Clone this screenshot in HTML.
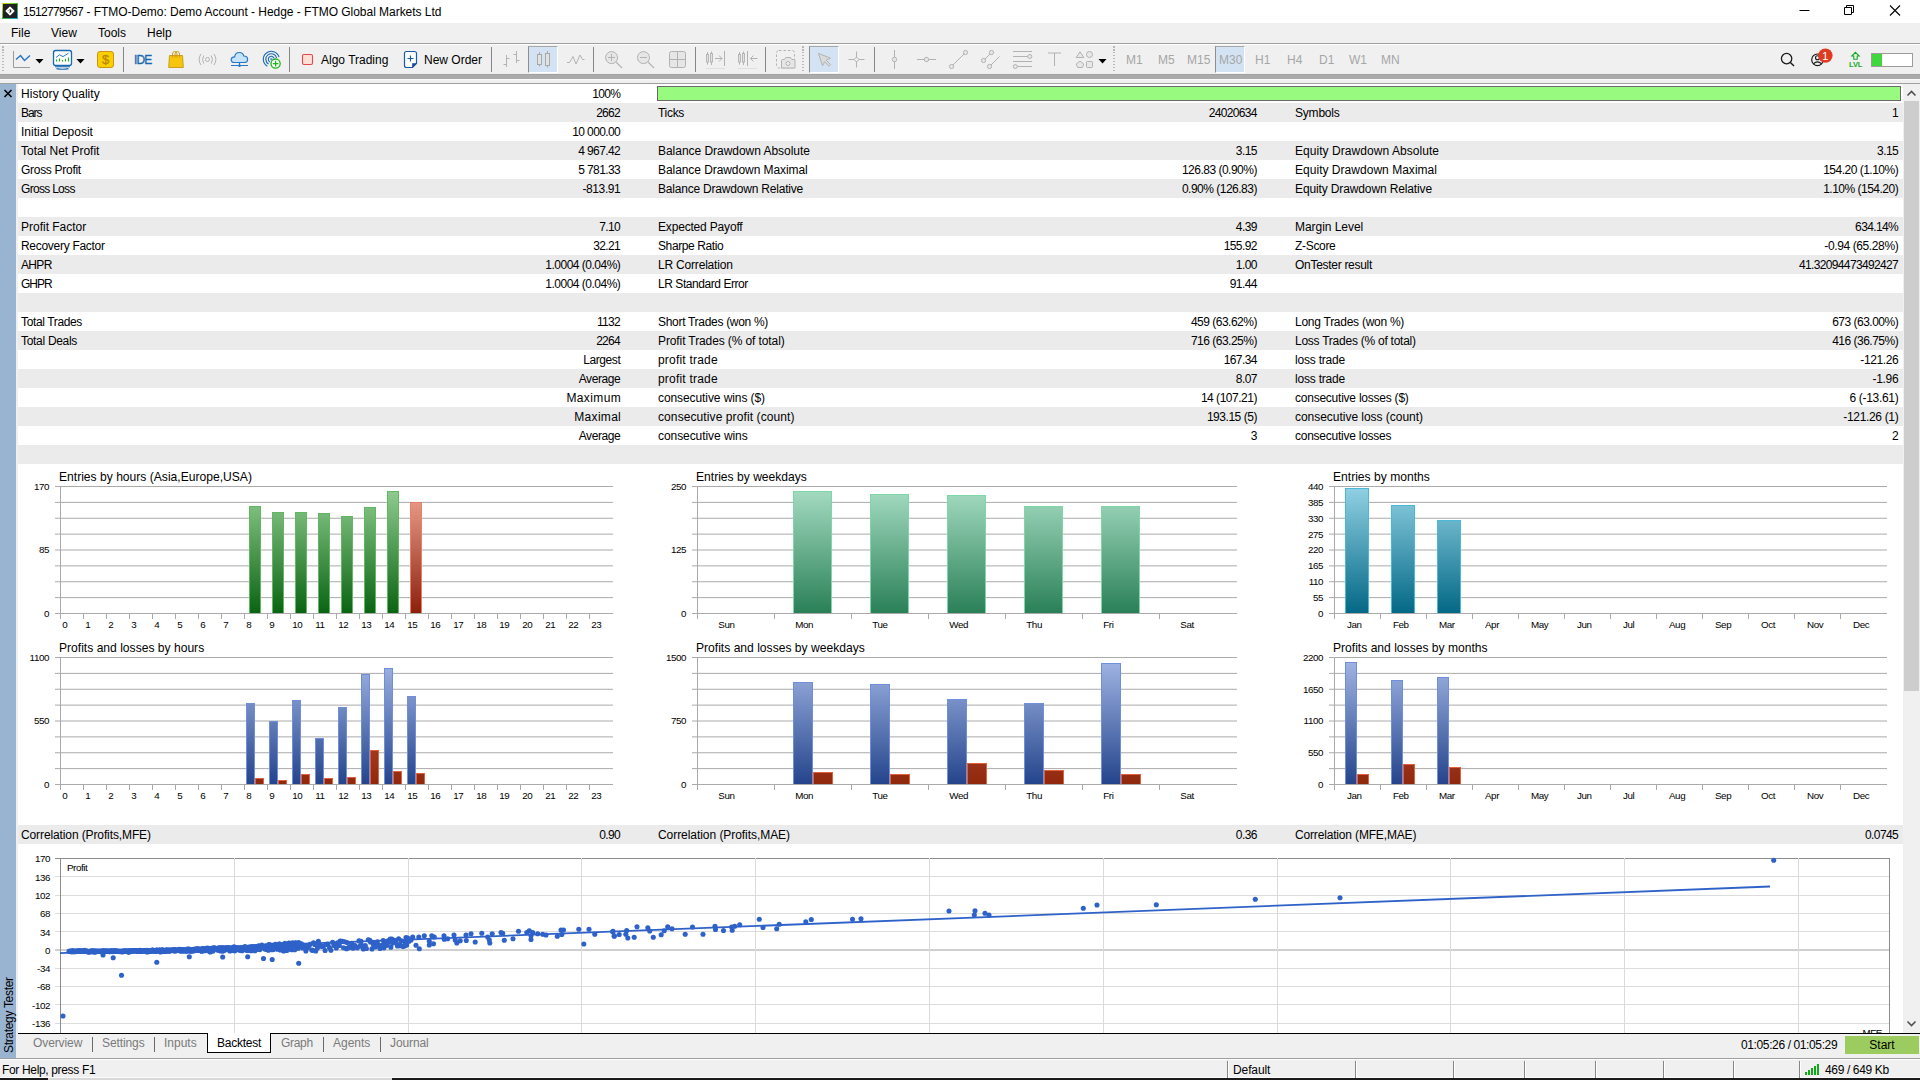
<!DOCTYPE html><html><head><meta charset="utf-8"><title>MT5</title><style>

*{box-sizing:border-box;margin:0;padding:0}
html,body{width:1920px;height:1080px;overflow:hidden;background:#f0f0f0;font-family:"Liberation Sans",sans-serif;font-size:12px;color:#000}
.abs{position:absolute}
.t{position:absolute;white-space:nowrap;line-height:19px;height:19px;font-size:12px;margin-top:1px}
.r{text-align:right}
.row{position:absolute;left:18px;width:1885px;height:19px}
.g{background:#ebebeb}
.wh{background:#fff}
svg{position:absolute;left:0;top:0}
.tab{position:absolute;top:1034px;height:19px;line-height:18px;color:#7a7a7a;font-size:12px;white-space:nowrap}
.tf{position:absolute;top:49px;height:20px;line-height:20px;font-size:12px;color:#9a9a9a;white-space:nowrap}

</style></head><body>
<div class="abs" style="left:0;top:0;width:1920px;height:23px;background:#fff"></div>
<div class="abs" style="left:2px;top:3px;width:16px;height:16px;background:linear-gradient(135deg,#ecd81c 0%,#3cc028 50%,#1c9cec 100%)"></div>
<div class="abs" style="left:3px;top:4px;width:14px;height:14px;background:#212123"></div>
<svg width="20" height="22" viewBox="0 0 20 22"><path d="M10 7.1 L13.9 11 L10 14.9 L6.1 11 Z" fill="#fff" stroke="#fff" stroke-width="1.2" stroke-linejoin="round"/><path d="M9.9 9.4 Q12.6 11 9.9 12.6 Q10.9 11 9.9 9.4 Z" fill="#111" stroke="#111" stroke-width="0.7"/><path d="M7.6 11.3 L9.2 9.7" stroke="#999" stroke-width="0.6"/></svg>
<div class="t" style="left:23px;top:2px;letter-spacing:-0.03px"><span style="letter-spacing:-0.66px">1512779567</span> - FTMO-Demo: Demo Account - Hedge - FTMO Global Markets Ltd</div>
<svg width="1920" height="23" viewBox="0 0 1920 23"><path d="M1799.5 10.5 H1809.5" stroke="#000" stroke-width="1"/><path d="M1844.5 7.5 H1851.5 V14.5 H1844.5 Z M1846.5 7.5 V5.5 H1853.5 V12.5 H1851.5" fill="none" stroke="#000" stroke-width="1"/><path d="M1890 5.5 L1900 15.5 M1900 5.5 L1890 15.5" stroke="#000" stroke-width="1.1"/></svg>
<div class="abs" style="left:0;top:23px;width:1920px;height:20px;background:#f0f0f0"></div>
<div class="t" style="left:11px;top:23px">File</div>
<div class="t" style="left:51px;top:23px">View</div>
<div class="t" style="left:98px;top:23px">Tools</div>
<div class="t" style="left:147px;top:23px">Help</div>
<div class="abs" style="left:0;top:43px;width:1920px;height:1px;background:#a0a0a0"></div>
<div class="abs" style="left:0;top:44px;width:1920px;height:1px;background:#fff"></div>
<div class="abs" style="left:0;top:74px;width:1920px;height:5px;background:#ababab;border-top:1px solid #a2a2a2"></div>
<div class="abs" style="left:0;top:79px;width:1920px;height:1px;background:#fafafa"></div>
<div class="abs" style="left:0;top:83px;width:1920px;height:1px;background:#a0a0a0"></div>
<div class="abs" style="left:528px;top:46px;width:30px;height:27px;background:#d4e3f4;border-left:1px solid #8e8e8e;border-top:1px solid #a8a8a8;border-right:1px solid #fff;border-bottom:1px solid #fff"></div>
<div class="abs" style="left:809px;top:46px;width:30px;height:27px;background:#d4e3f4;border-left:1px solid #8e8e8e;border-top:1px solid #a8a8a8;border-right:1px solid #fff;border-bottom:1px solid #fff"></div>
<div class="abs" style="left:1215px;top:46px;width:30px;height:27px;background:#d4e3f4;border-left:1px solid #8e8e8e;border-top:1px solid #a8a8a8;border-right:1px solid #fff;border-bottom:1px solid #fff"></div>
<div class="abs" style="left:123px;top:47px;width:1px;height:25px;background:#868686"></div>
<div class="abs" style="left:289px;top:47px;width:1px;height:25px;background:#868686"></div>
<div class="abs" style="left:491px;top:47px;width:1px;height:25px;background:#868686"></div>
<div class="abs" style="left:593px;top:47px;width:1px;height:25px;background:#868686"></div>
<div class="abs" style="left:695px;top:47px;width:1px;height:25px;background:#868686"></div>
<div class="abs" style="left:765px;top:47px;width:1px;height:25px;background:#868686"></div>
<div class="abs" style="left:874px;top:47px;width:1px;height:25px;background:#868686"></div>
<div class="abs" style="left:2px;top:46px;width:2px;height:27px;background:repeating-linear-gradient(180deg,#b8b8b8 0,#b8b8b8 1.5px,transparent 1.5px,transparent 3px)"></div>
<div class="abs" style="left:802px;top:46px;width:2px;height:27px;background:repeating-linear-gradient(180deg,#b8b8b8 0,#b8b8b8 1.5px,transparent 1.5px,transparent 3px)"></div>
<div class="abs" style="left:1113px;top:46px;width:2px;height:27px;background:repeating-linear-gradient(180deg,#b8b8b8 0,#b8b8b8 1.5px,transparent 1.5px,transparent 3px)"></div>
<div class="t" style="left:321px;top:50px">Algo Trading</div>
<div class="t" style="left:424px;top:50px">New Order</div>
<div class="t" style="left:1126px;top:50px;color:#a6a6a6">M1</div>
<div class="t" style="left:1158px;top:50px;color:#a6a6a6">M5</div>
<div class="t" style="left:1187px;top:50px;color:#a6a6a6">M15</div>
<div class="t" style="left:1219px;top:50px;color:#a6a6a6">M30</div>
<div class="t" style="left:1255px;top:50px;color:#a6a6a6">H1</div>
<div class="t" style="left:1287px;top:50px;color:#a6a6a6">H4</div>
<div class="t" style="left:1319px;top:50px;color:#a6a6a6">D1</div>
<div class="t" style="left:1349px;top:50px;color:#a6a6a6">W1</div>
<div class="t" style="left:1381px;top:50px;color:#a6a6a6">MN</div>
<div class="t" style="left:134px;top:49px;color:#1a68b0;font-size:13px;letter-spacing:-0.9px;-webkit-text-stroke:0.35px #1a68b0;transform-origin:0 50%;transform:scaleX(0.92)">IDE</div>
<svg width="1920" height="84" viewBox="0 0 1920 84" fill="none" stroke-linecap="butt">
<path d="M13.5 51 V67.5 H30" stroke="#9a9a9a" stroke-width="1"/>
<path d="M16 59.5 L20.5 55.5 L24.5 60.5 L30 55.5" stroke="#2a78c4" stroke-width="1.5"/>
<path d="M35.5 59 H43.5 L39.5 63.5 Z" fill="#000"/>
<rect x="53.5" y="50.5" width="18" height="15" rx="2.2" stroke="#1a68b0" stroke-width="1.3" fill="#fff"/>
<path d="M55 66.8 H70 M56.5 68.6 Q62.5 70 68.5 68.6" stroke="#1a68b0" stroke-width="1.1"/>
<path d="M56 57.5 L59.5 54.8 L63 56.6 L68.5 53.2" stroke="#2a78c4" stroke-width="1"/>
<path d="M56.5 61.5 V59.5 M59.5 61.5 V58.5 M62.5 61.5 V60 M65.5 61.5 V59 M68.5 61.5 V57.5" stroke="#22b022" stroke-width="1.2"/>
<path d="M76.5 59 H84.5 L80.5 63.5 Z" fill="#000"/>
<rect x="97.5" y="51.5" width="16" height="16" rx="2.5" fill="#fcd000" stroke="#c99512" stroke-width="1"/>
<text x="105.5" y="64.2" text-anchor="middle" font-size="13" fill="#b8860e" stroke="#b8860e" stroke-width="0.3" style="font-family:'Liberation Sans',sans-serif">$</text>
<path d="M169.5 55.5 H182.5 L183.3 67.5 H168.7 Z" fill="#f6c60c" stroke="#c99512" stroke-width="0.9"/>
<path d="M172.5 57.5 V54 Q172.5 51.5 174.7 51.5 Q177 51.5 177 54 V57.5 M175 57.5 V54 Q175 51.5 177.3 51.5 Q179.5 51.5 179.5 54 V57.5" stroke="#c99512" stroke-width="0.9"/>
<circle cx="207.5" cy="59.5" r="2" stroke="#b2b2b2" stroke-width="1"/>
<path d="M203.8 55.5 Q201.2 59.5 203.8 63.5 M211.2 55.5 Q213.8 59.5 211.2 63.5 M201 54 Q197.2 59.5 201 65 M214 54 Q217.8 59.5 214 65" stroke="#b2b2b2" stroke-width="1"/>
<path d="M234.5 62.5 Q231 62.5 231.2 59.5 Q231.5 56.8 234.6 56.8 Q235.2 52.5 239.3 52.5 Q243 52.5 243.8 56 Q247.6 56.2 247.6 59.4 Q247.6 62.5 244 62.5 Z" fill="#c6e4ff" stroke="#2a78c4" stroke-width="1.2"/>
<path d="M239.5 62.5 V65.5 M231 65.5 H248" stroke="#2a78c4" stroke-width="1.2"/><circle cx="239.5" cy="65.7" r="1.3" fill="#2a78c4"/>
<path d="M267.30 66.23 A8 8 0 1 1 279.03 57.23" stroke="#1a68b0" stroke-width="1.1"/>
<path d="M268.55 64.06 A5.5 5.5 0 1 1 276.61 57.88" stroke="#1a68b0" stroke-width="1.1"/>
<path d="M269.80 61.90 A3 3 0 1 1 274.20 58.52" stroke="#1a68b0" stroke-width="1.1"/>
<circle cx="271.3" cy="59.3" r="1.2" fill="#5a9ad8"/>
<circle cx="275.6" cy="63.6" r="4.6" fill="#fff" stroke="#1eb41e" stroke-width="1.3"/>
<path d="M272.8 63.6 H278.4 M275.6 60.8 V66.4" stroke="#1eb41e" stroke-width="1.3"/>
<rect x="302.5" y="54.5" width="10" height="10" rx="1.5" fill="#ffe0d8" stroke="#e2484a" stroke-width="1.1"/>
<path d="M406.5 51.5 H414.5 Q416.5 51.5 416.5 53.5 V63.5 L412.5 67.5 H406.5 Q404.5 67.5 404.5 65.5 V53.5 Q404.5 51.5 406.5 51.5 Z" fill="#fff" stroke="#1a5ca4" stroke-width="1.2"/>
<path d="M416.5 63.5 L412.5 67.5 V63.5 Z" fill="#1a4c94" stroke="#1a4c94" stroke-width="0.6"/>
<path d="M407.5 58.5 H413.5 M410.5 55.5 V61.5" stroke="#1a5ca4" stroke-width="1.2"/>
<path d="M506.5 55 V67 M503.5 64.5 H506.5 M506.5 58.5 H509.5 M516.5 51 V63 M513.5 54.5 H516.5 M516.5 60.5 H519.5" stroke="#b2b2b2" stroke-width="1"/>
<path d="M539.5 52 V66.5 M547.5 51 V67.5" stroke="#a8a8a8" stroke-width="1"/>
<rect x="537.5" y="54.5" width="4" height="10" fill="#e2e2e2" stroke="#a8a8a8" stroke-width="1"/><rect x="545.5" y="53.5" width="4" height="12" fill="#e2e2e2" stroke="#a8a8a8" stroke-width="1"/>
<path d="M567 62.5 H569.5 L573 56.5 L576 64 L580 55 L582.5 59.5 H584.5" stroke="#b2b2b2" stroke-width="1"/>
<circle cx="611.6" cy="57.6" r="6" fill="#e6e6e6" stroke="#b2b2b2" stroke-width="1"/><path d="M616 62 L622 68" stroke="#b2b2b2" stroke-width="1.1"/><path d="M608 57.5 H615 M611.5 54 V61" stroke="#b2b2b2" stroke-width="1"/>
<circle cx="643.5" cy="57.6" r="6" fill="#e6e6e6" stroke="#b2b2b2" stroke-width="1"/><path d="M648 62 L654 68" stroke="#b2b2b2" stroke-width="1.1"/><path d="M640 57.5 H647" stroke="#b2b2b2" stroke-width="1"/>
<rect x="669.5" y="51.5" width="16" height="16" rx="2" fill="#e6e6e6" stroke="#b2b2b2" stroke-width="1"/><path d="M677.5 51.5 V67.5 M669.5 59.5 H685.5" stroke="#b2b2b2" stroke-width="1"/>
<path d="M707.5 52 V64.5 M711.5 51.5 V65" stroke="#b2b2b2" stroke-width="1"/>
<rect x="706.5" y="54.5" width="2" height="7.5" fill="#e2e2e2" stroke="#b2b2b2" stroke-width="0.9"/><rect x="710.5" y="53.5" width="2" height="8.5" fill="#e2e2e2" stroke="#b2b2b2" stroke-width="0.9"/>
<path d="M706 68.5 H725" stroke="#e0e0e0" stroke-width="1"/>
<path d="M739.5 52 V64.5 M743.5 51.5 V65" stroke="#b2b2b2" stroke-width="1"/>
<rect x="738.5" y="54.5" width="2" height="7.5" fill="#e2e2e2" stroke="#b2b2b2" stroke-width="0.9"/><rect x="742.5" y="53.5" width="2" height="8.5" fill="#e2e2e2" stroke="#b2b2b2" stroke-width="0.9"/>
<path d="M738 68.5 H757" stroke="#e0e0e0" stroke-width="1"/>
<path d="M715 58.5 H722 M719 55.5 L722 58.5 L719 61.5 M724.5 51 V66" stroke="#b2b2b2" stroke-width="1"/>
<path d="M747.5 51 V66 M750.5 58.5 H757.5 M753.5 55.5 L750.5 58.5 L753.5 61.5" stroke="#b2b2b2" stroke-width="1"/>
<rect x="776.5" y="50.5" width="18" height="17.5" rx="2.5" stroke="#b2b2b2" stroke-width="1" stroke-dasharray="2.5 2"/>
<path d="M781.5 68 V60.5 Q781.5 59.5 782.5 59.5 H784.5 L785.8 57.5 H790.5 L791.8 59.5 H794 Q795 59.5 795 60.5 V68 Z" fill="#e6e6e6" stroke="#b2b2b2" stroke-width="1"/><circle cx="788" cy="63.5" r="2" fill="#f0f0f0" stroke="#b2b2b2" stroke-width="1"/>
<path d="M818.4 53.4 L830.5 58.2 L826.2 60.2 L830.6 64.6 L829 66.2 L824.6 61.8 L822.6 65.8 Z" fill="#dadada" stroke="#b2b2b2" stroke-width="1" stroke-linejoin="round"/>
<path d="M848.5 59.5 H864.5 M856.5 51.5 V67.5" stroke="#b2b2b2" stroke-width="1"/><path d="M856.5 57 L859 59.5 L856.5 62 L854 59.5 Z" fill="#f0f0f0" stroke="#b2b2b2" stroke-width="1"/>
<path d="M894.5 50 V69" stroke="#b2b2b2" stroke-width="1"/><circle cx="894.5" cy="59.5" r="2.2" fill="#e8e8e8" stroke="#b2b2b2" stroke-width="1"/>
<path d="M917 59.5 H936" stroke="#b2b2b2" stroke-width="1"/><circle cx="926.5" cy="59.5" r="2.2" fill="#e8e8e8" stroke="#b2b2b2" stroke-width="1"/>
<path d="M951.5 66.5 L965.5 52.5" stroke="#b2b2b2" stroke-width="1"/><circle cx="951.5" cy="66.5" r="2.1" fill="#e8e8e8" stroke="#b2b2b2" stroke-width="1"/><circle cx="965.5" cy="52.5" r="2.1" fill="#e8e8e8" stroke="#b2b2b2" stroke-width="1"/>
<path d="M983.5 60.5 L991.5 52.5 M989.5 66.5 L999.5 56.5" stroke="#b2b2b2" stroke-width="1"/><circle cx="983.5" cy="60.5" r="2.1" fill="#e8e8e8" stroke="#b2b2b2" stroke-width="1"/><circle cx="991.5" cy="52.5" r="2.1" fill="#e8e8e8" stroke="#b2b2b2" stroke-width="1"/><circle cx="989.5" cy="66.5" r="2.1" fill="#e8e8e8" stroke="#b2b2b2" stroke-width="1"/>
<path d="M1013 51.5 H1032 M1013 56.5 H1028 M1013 61.5 H1032 M1017 66.5 H1032" stroke="#b2b2b2" stroke-width="1"/><circle cx="1029.8" cy="56.5" r="2" fill="#e8e8e8" stroke="#b2b2b2" stroke-width="1"/><circle cx="1015.3" cy="66.5" r="2" fill="#e8e8e8" stroke="#b2b2b2" stroke-width="1"/>
<path d="M1048 53 H1061 M1054.5 53 V66" stroke="#b2b2b2" stroke-width="1"/>
<path d="M1080 51.8 L1083.8 57.5 H1076.2 Z" fill="#e8e8e8" stroke="#b2b2b2" stroke-width="1"/><circle cx="1089.5" cy="54.5" r="3" fill="#e8e8e8" stroke="#b2b2b2" stroke-width="1"/><path d="M1080 61.2 L1083.8 64 L1082.4 67.5 H1077.6 L1076.2 64 Z" fill="#e8e8e8" stroke="#b2b2b2" stroke-width="1"/><rect x="1086.5" y="61.5" width="6" height="6" rx="0.8" fill="#e8e8e8" stroke="#b2b2b2" stroke-width="1"/>
<path d="M1098.5 59 H1106.5 L1102.5 63.5 Z" fill="#000"/>
<circle cx="1786.6" cy="58.6" r="5.2" stroke="#1a1a1a" stroke-width="1.3"/><path d="M1790.4 62.4 L1794 66" stroke="#1a1a1a" stroke-width="1.4"/>
<circle cx="1817.5" cy="59.8" r="5.8" stroke="#1a1a1a" stroke-width="1.2"/><circle cx="1817.5" cy="57.8" r="2" stroke="#1a1a1a" stroke-width="1.1"/><path d="M1813.4 63.8 Q1817.5 59.8 1821.6 63.8" stroke="#1a1a1a" stroke-width="1.1"/>
<circle cx="1825.4" cy="55.6" r="7.2" fill="#e03a20"/>
<text x="1825.3" y="60" text-anchor="middle" font-size="11.5" fill="#fff" stroke="none" style="font-family:'Liberation Sans',sans-serif">1</text>
<path d="M1855.5 52.3 L1859.2 56 H1857.2 V59.3 H1853.8 V56 H1851.8 Z" stroke="#18a828" stroke-width="1.1" fill="#eaffea"/>
<text x="1855.7" y="66.8" text-anchor="middle" font-size="7.6" font-weight="bold" fill="#18a828" stroke="none" letter-spacing="-0.2" style="font-family:'Liberation Sans',sans-serif">LVL</text>
<rect x="1871.5" y="53.5" width="41" height="13" fill="#fff" stroke="#9c9c9c" stroke-width="1"/><rect x="1872" y="54" width="10" height="12" fill="#3ed83e"/>
</svg>
<div class="abs" style="left:0;top:84px;width:16px;height:974px;background:#99b4d1"></div>
<svg width="16" height="110" style="top:84px" viewBox="0 0 16 110"><path d="M4.5 6 L11.5 13 M11.5 6 L4.5 13" stroke="#000" stroke-width="1.6"/></svg>
<div class="abs" style="left:1px;top:1053px;width:80px;height:16px;line-height:16px;font-size:12px;letter-spacing:-0.32px;transform-origin:0 0;transform:rotate(-90deg);white-space:nowrap">Strategy Tester</div>
<div class="abs" style="left:18px;top:84px;width:1885px;height:949px;background:#fff"></div>
<div class="t" style="left:21px;top:84px;letter-spacing:0.050px">History Quality</div>
<div class="t r" style="left:320.13px;width:300px;top:84px;letter-spacing:-0.673px">100%</div>
<div class="row g" style="top:103px"></div>
<div class="t" style="left:21px;top:103px;letter-spacing:-1.033px">Bars</div>
<div class="t r" style="left:320.13px;width:300px;top:103px;letter-spacing:-0.674px">2662</div>
<div class="t" style="left:658px;top:103px;letter-spacing:-0.300px">Ticks</div>
<div class="t r" style="left:956.73px;width:300px;top:103px;letter-spacing:-0.674px">24020634</div>
<div class="t" style="left:1295px;top:103px;letter-spacing:-0.200px">Symbols</div>
<div class="t r" style="left:1598.03px;width:300px;top:103px;letter-spacing:-0.674px">1</div>
<div class="t" style="left:21px;top:122px;letter-spacing:-0.007px">Initial Deposit</div>
<div class="t r" style="left:320.20px;width:300px;top:122px;letter-spacing:-0.598px">10 000.00</div>
<div class="row g" style="top:141px"></div>
<div class="t" style="left:21px;top:141px;letter-spacing:-0.020px">Total Net Profit</div>
<div class="t r" style="left:320.21px;width:300px;top:141px;letter-spacing:-0.589px">4 967.42</div>
<div class="t" style="left:658px;top:141px;letter-spacing:-0.033px">Balance Drawdown Absolute</div>
<div class="t r" style="left:956.81px;width:300px;top:141px;letter-spacing:-0.589px">3.15</div>
<div class="t" style="left:1295px;top:141px;letter-spacing:0.052px">Equity Drawdown Absolute</div>
<div class="t r" style="left:1598.11px;width:300px;top:141px;letter-spacing:-0.589px">3.15</div>
<div class="t" style="left:21px;top:160px;letter-spacing:-0.291px">Gross Profit</div>
<div class="t r" style="left:320.21px;width:300px;top:160px;letter-spacing:-0.589px">5 781.33</div>
<div class="t" style="left:658px;top:160px;letter-spacing:-0.070px">Balance Drawdown Maximal</div>
<div class="t r" style="left:956.90px;width:300px;top:160px;letter-spacing:-0.504px">126.83 (0.90%)</div>
<div class="t" style="left:1295px;top:160px;letter-spacing:0.027px">Equity Drawdown Maximal</div>
<div class="t r" style="left:1598.20px;width:300px;top:160px;letter-spacing:-0.504px">154.20 (1.10%)</div>
<div class="row g" style="top:179px"></div>
<div class="t" style="left:21px;top:179px;letter-spacing:-0.700px">Gross Loss</div>
<div class="t r" style="left:320.41px;width:300px;top:179px;letter-spacing:-0.386px">-813.91</div>
<div class="t" style="left:658px;top:179px;letter-spacing:-0.200px">Balance Drawdown Relative</div>
<div class="t r" style="left:956.90px;width:300px;top:179px;letter-spacing:-0.504px">0.90% (126.83)</div>
<div class="t" style="left:1295px;top:179px;letter-spacing:-0.126px">Equity Drawdown Relative</div>
<div class="t r" style="left:1598.20px;width:300px;top:179px;letter-spacing:-0.504px">1.10% (154.20)</div>
<div class="row g" style="top:217px"></div>
<div class="t" style="left:21px;top:217px;letter-spacing:-0.008px">Profit Factor</div>
<div class="t r" style="left:320.21px;width:300px;top:217px;letter-spacing:-0.589px">7.10</div>
<div class="t" style="left:658px;top:217px;letter-spacing:-0.179px">Expected Payoff</div>
<div class="t r" style="left:956.81px;width:300px;top:217px;letter-spacing:-0.589px">4.39</div>
<div class="t" style="left:1295px;top:217px;letter-spacing:-0.045px">Margin Level</div>
<div class="t r" style="left:1598.08px;width:300px;top:217px;letter-spacing:-0.625px">634.14%</div>
<div class="t" style="left:21px;top:236px;letter-spacing:-0.293px">Recovery Factor</div>
<div class="t r" style="left:320.19px;width:300px;top:236px;letter-spacing:-0.606px">32.21</div>
<div class="t" style="left:658px;top:236px;letter-spacing:-0.400px">Sharpe Ratio</div>
<div class="t r" style="left:956.78px;width:300px;top:236px;letter-spacing:-0.617px">155.92</div>
<div class="t" style="left:1295px;top:236px;letter-spacing:-0.317px">Z-Score</div>
<div class="t r" style="left:1598.32px;width:300px;top:236px;letter-spacing:-0.384px">-0.94 (65.28%)</div>
<div class="row g" style="top:255px"></div>
<div class="t" style="left:21px;top:255px;letter-spacing:-0.667px">AHPR</div>
<div class="t r" style="left:320.30px;width:300px;top:255px;letter-spacing:-0.504px">1.0004 (0.04%)</div>
<div class="t" style="left:658px;top:255px;letter-spacing:-0.192px">LR Correlation</div>
<div class="t r" style="left:956.81px;width:300px;top:255px;letter-spacing:-0.589px">1.00</div>
<div class="t" style="left:1295px;top:255px;letter-spacing:-0.293px">OnTester result</div>
<div class="t r" style="left:1598.05px;width:300px;top:255px;letter-spacing:-0.654px">41.32094473492427</div>
<div class="t" style="left:21px;top:274px;letter-spacing:-1.000px">GHPR</div>
<div class="t r" style="left:320.30px;width:300px;top:274px;letter-spacing:-0.504px">1.0004 (0.04%)</div>
<div class="t" style="left:658px;top:274px;letter-spacing:-0.444px">LR Standard Error</div>
<div class="t r" style="left:956.79px;width:300px;top:274px;letter-spacing:-0.606px">91.44</div>
<div class="row g" style="top:293px"></div>
<div class="t" style="left:21px;top:312px;letter-spacing:-0.364px">Total Trades</div>
<div class="t r" style="left:320.13px;width:300px;top:312px;letter-spacing:-0.674px">1132</div>
<div class="t" style="left:658px;top:312px;letter-spacing:-0.300px">Short Trades (won %)</div>
<div class="t r" style="left:956.90px;width:300px;top:312px;letter-spacing:-0.504px">459 (63.62%)</div>
<div class="t" style="left:1295px;top:312px;letter-spacing:-0.261px">Long Trades (won %)</div>
<div class="t r" style="left:1598.20px;width:300px;top:312px;letter-spacing:-0.504px">673 (63.00%)</div>
<div class="row g" style="top:331px"></div>
<div class="t" style="left:21px;top:331px;letter-spacing:-0.300px">Total Deals</div>
<div class="t r" style="left:320.13px;width:300px;top:331px;letter-spacing:-0.674px">2264</div>
<div class="t" style="left:658px;top:331px;letter-spacing:-0.108px">Profit Trades (% of total)</div>
<div class="t r" style="left:956.90px;width:300px;top:331px;letter-spacing:-0.504px">716 (63.25%)</div>
<div class="t" style="left:1295px;top:331px;letter-spacing:-0.248px">Loss Trades (% of total)</div>
<div class="t r" style="left:1598.20px;width:300px;top:331px;letter-spacing:-0.504px">416 (36.75%)</div>
<div class="t r" style="left:320.40px;width:300px;top:350px;letter-spacing:-0.400px">Largest</div>
<div class="t" style="left:658px;top:350px;letter-spacing:0.200px">profit trade</div>
<div class="t r" style="left:956.78px;width:300px;top:350px;letter-spacing:-0.617px">167.34</div>
<div class="t" style="left:1295px;top:350px;letter-spacing:-0.200px">loss trade</div>
<div class="t r" style="left:1598.31px;width:300px;top:350px;letter-spacing:-0.386px">-121.26</div>
<div class="row g" style="top:369px"></div>
<div class="t r" style="left:320.40px;width:300px;top:369px;letter-spacing:-0.400px">Average</div>
<div class="t" style="left:658px;top:369px;letter-spacing:0.200px">profit trade</div>
<div class="t r" style="left:956.81px;width:300px;top:369px;letter-spacing:-0.589px">8.07</div>
<div class="t" style="left:1295px;top:369px;letter-spacing:-0.200px">loss trade</div>
<div class="t r" style="left:1598.43px;width:300px;top:369px;letter-spacing:-0.270px">-1.96</div>
<div class="t r" style="left:321.20px;width:300px;top:388px;letter-spacing:0.400px">Maximum</div>
<div class="t" style="left:658px;top:388px;letter-spacing:-0.084px">consecutive wins ($)</div>
<div class="t r" style="left:956.91px;width:300px;top:388px;letter-spacing:-0.489px">14 (107.21)</div>
<div class="t" style="left:1295px;top:388px;letter-spacing:-0.233px">consecutive losses ($)</div>
<div class="t r" style="left:1598.40px;width:300px;top:388px;letter-spacing:-0.303px">6 (-13.61)</div>
<div class="row g" style="top:407px"></div>
<div class="t r" style="left:321.10px;width:300px;top:407px;letter-spacing:0.300px">Maximal</div>
<div class="t" style="left:658px;top:407px;letter-spacing:0.096px">consecutive profit (count)</div>
<div class="t r" style="left:956.93px;width:300px;top:407px;letter-spacing:-0.470px">193.15 (5)</div>
<div class="t" style="left:1295px;top:407px;letter-spacing:-0.030px">consecutive loss (count)</div>
<div class="t r" style="left:1598.36px;width:300px;top:407px;letter-spacing:-0.336px">-121.26 (1)</div>
<div class="t r" style="left:320.40px;width:300px;top:426px;letter-spacing:-0.400px">Average</div>
<div class="t" style="left:658px;top:426px;letter-spacing:-0.067px">consecutive wins</div>
<div class="t r" style="left:956.73px;width:300px;top:426px;letter-spacing:-0.674px">3</div>
<div class="t" style="left:1295px;top:426px;letter-spacing:-0.247px">consecutive losses</div>
<div class="t r" style="left:1598.03px;width:300px;top:426px;letter-spacing:-0.674px">2</div>
<div class="row g" style="top:445px"></div>
<div class="row g" style="top:825px"></div>
<div class="t" style="left:21px;top:825px;letter-spacing:-0.113px">Correlation (Profits,MFE)</div>
<div class="t r" style="left:320.21px;width:300px;top:825px;letter-spacing:-0.589px">0.90</div>
<div class="t" style="left:658px;top:825px;letter-spacing:-0.054px">Correlation (Profits,MAE)</div>
<div class="t r" style="left:956.81px;width:300px;top:825px;letter-spacing:-0.589px">0.36</div>
<div class="t" style="left:1295px;top:825px;letter-spacing:-0.165px">Correlation (MFE,MAE)</div>
<div class="t r" style="left:1598.08px;width:300px;top:825px;letter-spacing:-0.617px">0.0745</div>
<div class="abs" style="left:657px;top:86px;width:1244px;height:15px;background:#98fb80;border:1px solid #6a6a6a"></div>
<div class="abs" style="left:1904px;top:84px;width:16px;height:949px;background:#f0f0f0"></div>
<div class="abs" style="left:1904px;top:101px;width:15px;height:590px;background:#cdcdcd"></div>
<svg width="1920" height="1080" viewBox="0 0 1920 1080" style="pointer-events:none"><path d="M1907.5 95.5 L1911.5 91.5 L1915.5 95.5" fill="none" stroke="#505050" stroke-width="1.6"/><path d="M1907.5 1021.5 L1911.5 1025.5 L1915.5 1021.5" fill="none" stroke="#505050" stroke-width="1.6"/></svg>
<svg width="1920" height="1080" viewBox="0 0 1920 1080" shape-rendering="crispEdges" style="font-family:'Liberation Sans',sans-serif">
<style>.ct{font-size:9.8px;fill:#000;letter-spacing:-0.42px}.ctt{font-size:12.1px;fill:#000}</style>
<defs>
<linearGradient id="gG" gradientUnits="userSpaceOnUse" x1="0" y1="486" x2="0" y2="613"><stop offset="0" stop-color="#93cf93"/><stop offset="1" stop-color="#0a6412"/></linearGradient>
<linearGradient id="gR" gradientUnits="userSpaceOnUse" x1="0" y1="486" x2="0" y2="613"><stop offset="0" stop-color="#f2a894"/><stop offset="1" stop-color="#8c200c"/></linearGradient>
<linearGradient id="gT" gradientUnits="userSpaceOnUse" x1="0" y1="486" x2="0" y2="613"><stop offset="0" stop-color="#a8dec4"/><stop offset="1" stop-color="#2a8058"/></linearGradient>
<linearGradient id="gC" gradientUnits="userSpaceOnUse" x1="0" y1="486" x2="0" y2="613"><stop offset="0" stop-color="#92d2e4"/><stop offset="1" stop-color="#036886"/></linearGradient>
<linearGradient id="gB" gradientUnits="userSpaceOnUse" x1="0" y1="657" x2="0" y2="784"><stop offset="0" stop-color="#a4b8e6"/><stop offset="1" stop-color="#24448c"/></linearGradient>
<linearGradient id="gO" gradientUnits="userSpaceOnUse" x1="0" y1="657" x2="0" y2="784"><stop offset="0" stop-color="#c86848"/><stop offset="1" stop-color="#90280e"/></linearGradient>
</defs>
<line x1="55" y1="486.5" x2="613" y2="486.5" stroke="#aaaaaa" stroke-width="1" shape-rendering="geometricPrecision"/>
<line x1="55" y1="502.38" x2="613" y2="502.38" stroke="#aaaaaa" stroke-width="1" shape-rendering="geometricPrecision"/>
<line x1="55" y1="518.25" x2="613" y2="518.25" stroke="#aaaaaa" stroke-width="1" shape-rendering="geometricPrecision"/>
<line x1="55" y1="534.12" x2="613" y2="534.12" stroke="#aaaaaa" stroke-width="1" shape-rendering="geometricPrecision"/>
<line x1="55" y1="550" x2="613" y2="550" stroke="#aaaaaa" stroke-width="1" shape-rendering="geometricPrecision"/>
<line x1="55" y1="565.88" x2="613" y2="565.88" stroke="#aaaaaa" stroke-width="1" shape-rendering="geometricPrecision"/>
<line x1="55" y1="581.75" x2="613" y2="581.75" stroke="#aaaaaa" stroke-width="1" shape-rendering="geometricPrecision"/>
<line x1="55" y1="597.62" x2="613" y2="597.62" stroke="#aaaaaa" stroke-width="1" shape-rendering="geometricPrecision"/>
<line x1="55" y1="613.5" x2="613" y2="613.5" stroke="#aaaaaa" stroke-width="1" shape-rendering="geometricPrecision"/>
<rect x="60" y="486" width="1" height="128" fill="#aaaaaa"/>
<rect x="249.5" y="506.5" width="11" height="106.5" fill="url(#gG)" stroke="#62b862" stroke-width="1"/>
<rect x="272.5" y="512.5" width="11" height="100.5" fill="url(#gG)" stroke="#62b862" stroke-width="1"/>
<rect x="295.5" y="512" width="11" height="101" fill="url(#gG)" stroke="#62b862" stroke-width="1"/>
<rect x="318.5" y="513.5" width="11" height="99.5" fill="url(#gG)" stroke="#62b862" stroke-width="1"/>
<rect x="341.5" y="516.5" width="11" height="96.5" fill="url(#gG)" stroke="#62b862" stroke-width="1"/>
<rect x="364.5" y="507.5" width="11" height="105.5" fill="url(#gG)" stroke="#62b862" stroke-width="1"/>
<rect x="387.5" y="491.5" width="11" height="121.5" fill="url(#gG)" stroke="#62b862" stroke-width="1"/>
<rect x="410.5" y="502.5" width="11" height="110.5" fill="url(#gR)" stroke="#e8806a" stroke-width="1"/>
<rect x="55" y="613" width="558" height="1" fill="#aaaaaa"/>
<rect x="60" y="613" width="1" height="6" fill="#aaaaaa"/>
<rect x="83" y="613" width="1" height="6" fill="#aaaaaa"/>
<rect x="106" y="613" width="1" height="6" fill="#aaaaaa"/>
<rect x="129" y="613" width="1" height="6" fill="#aaaaaa"/>
<rect x="152" y="613" width="1" height="6" fill="#aaaaaa"/>
<rect x="175" y="613" width="1" height="6" fill="#aaaaaa"/>
<rect x="198" y="613" width="1" height="6" fill="#aaaaaa"/>
<rect x="221" y="613" width="1" height="6" fill="#aaaaaa"/>
<rect x="244" y="613" width="1" height="6" fill="#aaaaaa"/>
<rect x="267" y="613" width="1" height="6" fill="#aaaaaa"/>
<rect x="290" y="613" width="1" height="6" fill="#aaaaaa"/>
<rect x="313" y="613" width="1" height="6" fill="#aaaaaa"/>
<rect x="336" y="613" width="1" height="6" fill="#aaaaaa"/>
<rect x="359" y="613" width="1" height="6" fill="#aaaaaa"/>
<rect x="382" y="613" width="1" height="6" fill="#aaaaaa"/>
<rect x="405" y="613" width="1" height="6" fill="#aaaaaa"/>
<rect x="428" y="613" width="1" height="6" fill="#aaaaaa"/>
<rect x="451" y="613" width="1" height="6" fill="#aaaaaa"/>
<rect x="474" y="613" width="1" height="6" fill="#aaaaaa"/>
<rect x="497" y="613" width="1" height="6" fill="#aaaaaa"/>
<rect x="520" y="613" width="1" height="6" fill="#aaaaaa"/>
<rect x="543" y="613" width="1" height="6" fill="#aaaaaa"/>
<rect x="566" y="613" width="1" height="6" fill="#aaaaaa"/>
<rect x="589" y="613" width="1" height="6" fill="#aaaaaa"/>
<text x="49" y="489.9" text-anchor="end" class="ct">170</text>
<text x="49" y="553.4" text-anchor="end" class="ct">85</text>
<text x="49" y="616.9" text-anchor="end" class="ct">0</text>
<text x="62.3" y="628" class="ct">0</text>
<text x="85.3" y="628" class="ct">1</text>
<text x="108.3" y="628" class="ct">2</text>
<text x="131.3" y="628" class="ct">3</text>
<text x="154.3" y="628" class="ct">4</text>
<text x="177.3" y="628" class="ct">5</text>
<text x="200.3" y="628" class="ct">6</text>
<text x="223.3" y="628" class="ct">7</text>
<text x="246.3" y="628" class="ct">8</text>
<text x="269.3" y="628" class="ct">9</text>
<text x="292.3" y="628" class="ct">10</text>
<text x="315.3" y="628" class="ct">11</text>
<text x="338.3" y="628" class="ct">12</text>
<text x="361.3" y="628" class="ct">13</text>
<text x="384.3" y="628" class="ct">14</text>
<text x="407.3" y="628" class="ct">15</text>
<text x="430.3" y="628" class="ct">16</text>
<text x="453.3" y="628" class="ct">17</text>
<text x="476.3" y="628" class="ct">18</text>
<text x="499.3" y="628" class="ct">19</text>
<text x="522.3" y="628" class="ct">20</text>
<text x="545.3" y="628" class="ct">21</text>
<text x="568.3" y="628" class="ct">22</text>
<text x="591.3" y="628" class="ct">23</text>
<text x="59" y="481" class="ctt">Entries by hours (Asia,Europe,USA)</text>
<line x1="692" y1="486.5" x2="1237" y2="486.5" stroke="#aaaaaa" stroke-width="1" shape-rendering="geometricPrecision"/>
<line x1="692" y1="502.38" x2="1237" y2="502.38" stroke="#aaaaaa" stroke-width="1" shape-rendering="geometricPrecision"/>
<line x1="692" y1="518.25" x2="1237" y2="518.25" stroke="#aaaaaa" stroke-width="1" shape-rendering="geometricPrecision"/>
<line x1="692" y1="534.12" x2="1237" y2="534.12" stroke="#aaaaaa" stroke-width="1" shape-rendering="geometricPrecision"/>
<line x1="692" y1="550" x2="1237" y2="550" stroke="#aaaaaa" stroke-width="1" shape-rendering="geometricPrecision"/>
<line x1="692" y1="565.88" x2="1237" y2="565.88" stroke="#aaaaaa" stroke-width="1" shape-rendering="geometricPrecision"/>
<line x1="692" y1="581.75" x2="1237" y2="581.75" stroke="#aaaaaa" stroke-width="1" shape-rendering="geometricPrecision"/>
<line x1="692" y1="597.62" x2="1237" y2="597.62" stroke="#aaaaaa" stroke-width="1" shape-rendering="geometricPrecision"/>
<line x1="692" y1="613.5" x2="1237" y2="613.5" stroke="#aaaaaa" stroke-width="1" shape-rendering="geometricPrecision"/>
<rect x="697" y="486" width="1" height="128" fill="#aaaaaa"/>
<rect x="793.5" y="491.5" width="38" height="121.5" fill="url(#gT)" stroke="#7fd6a6" stroke-width="1"/>
<rect x="870.5" y="494.5" width="38" height="118.5" fill="url(#gT)" stroke="#7fd6a6" stroke-width="1"/>
<rect x="947.5" y="495.5" width="38" height="117.5" fill="url(#gT)" stroke="#7fd6a6" stroke-width="1"/>
<rect x="1024.5" y="506" width="38" height="107" fill="url(#gT)" stroke="#7fd6a6" stroke-width="1"/>
<rect x="1101.5" y="506.5" width="38" height="106.5" fill="url(#gT)" stroke="#7fd6a6" stroke-width="1"/>
<rect x="692" y="613" width="545" height="1" fill="#aaaaaa"/>
<rect x="697" y="613" width="1" height="6" fill="#aaaaaa"/>
<rect x="774" y="613" width="1" height="6" fill="#aaaaaa"/>
<rect x="851" y="613" width="1" height="6" fill="#aaaaaa"/>
<rect x="928" y="613" width="1" height="6" fill="#aaaaaa"/>
<rect x="1005" y="613" width="1" height="6" fill="#aaaaaa"/>
<rect x="1082" y="613" width="1" height="6" fill="#aaaaaa"/>
<rect x="1159" y="613" width="1" height="6" fill="#aaaaaa"/>
<text x="686" y="489.9" text-anchor="end" class="ct">250</text>
<text x="686" y="553.4" text-anchor="end" class="ct">125</text>
<text x="686" y="616.9" text-anchor="end" class="ct">0</text>
<text x="718.3" y="628" class="ct">Sun</text>
<text x="795.3" y="628" class="ct">Mon</text>
<text x="872.3" y="628" class="ct">Tue</text>
<text x="949.3" y="628" class="ct">Wed</text>
<text x="1026.3" y="628" class="ct">Thu</text>
<text x="1103.3" y="628" class="ct">Fri</text>
<text x="1180.3" y="628" class="ct">Sat</text>
<text x="696" y="481" class="ctt">Entries by weekdays</text>
<line x1="1329" y1="486.5" x2="1887" y2="486.5" stroke="#aaaaaa" stroke-width="1" shape-rendering="geometricPrecision"/>
<line x1="1329" y1="502.38" x2="1887" y2="502.38" stroke="#aaaaaa" stroke-width="1" shape-rendering="geometricPrecision"/>
<line x1="1329" y1="518.25" x2="1887" y2="518.25" stroke="#aaaaaa" stroke-width="1" shape-rendering="geometricPrecision"/>
<line x1="1329" y1="534.12" x2="1887" y2="534.12" stroke="#aaaaaa" stroke-width="1" shape-rendering="geometricPrecision"/>
<line x1="1329" y1="550" x2="1887" y2="550" stroke="#aaaaaa" stroke-width="1" shape-rendering="geometricPrecision"/>
<line x1="1329" y1="565.88" x2="1887" y2="565.88" stroke="#aaaaaa" stroke-width="1" shape-rendering="geometricPrecision"/>
<line x1="1329" y1="581.75" x2="1887" y2="581.75" stroke="#aaaaaa" stroke-width="1" shape-rendering="geometricPrecision"/>
<line x1="1329" y1="597.62" x2="1887" y2="597.62" stroke="#aaaaaa" stroke-width="1" shape-rendering="geometricPrecision"/>
<line x1="1329" y1="613.5" x2="1887" y2="613.5" stroke="#aaaaaa" stroke-width="1" shape-rendering="geometricPrecision"/>
<rect x="1334" y="486" width="1" height="128" fill="#aaaaaa"/>
<rect x="1345.5" y="488.5" width="23" height="124.5" fill="url(#gC)" stroke="#4ab8d8" stroke-width="1"/>
<rect x="1391.5" y="505.5" width="23" height="107.5" fill="url(#gC)" stroke="#4ab8d8" stroke-width="1"/>
<rect x="1437.5" y="520.2" width="23" height="92.8" fill="url(#gC)" stroke="#4ab8d8" stroke-width="1"/>
<rect x="1329" y="613" width="558" height="1" fill="#aaaaaa"/>
<rect x="1334" y="613" width="1" height="6" fill="#aaaaaa"/>
<rect x="1380" y="613" width="1" height="6" fill="#aaaaaa"/>
<rect x="1426" y="613" width="1" height="6" fill="#aaaaaa"/>
<rect x="1472" y="613" width="1" height="6" fill="#aaaaaa"/>
<rect x="1518" y="613" width="1" height="6" fill="#aaaaaa"/>
<rect x="1564" y="613" width="1" height="6" fill="#aaaaaa"/>
<rect x="1610" y="613" width="1" height="6" fill="#aaaaaa"/>
<rect x="1656" y="613" width="1" height="6" fill="#aaaaaa"/>
<rect x="1702" y="613" width="1" height="6" fill="#aaaaaa"/>
<rect x="1748" y="613" width="1" height="6" fill="#aaaaaa"/>
<rect x="1794" y="613" width="1" height="6" fill="#aaaaaa"/>
<rect x="1840" y="613" width="1" height="6" fill="#aaaaaa"/>
<text x="1323" y="489.9" text-anchor="end" class="ct">440</text>
<text x="1323" y="505.77" text-anchor="end" class="ct">385</text>
<text x="1323" y="521.65" text-anchor="end" class="ct">330</text>
<text x="1323" y="537.52" text-anchor="end" class="ct">275</text>
<text x="1323" y="553.4" text-anchor="end" class="ct">220</text>
<text x="1323" y="569.27" text-anchor="end" class="ct">165</text>
<text x="1323" y="585.15" text-anchor="end" class="ct">110</text>
<text x="1323" y="601.02" text-anchor="end" class="ct">55</text>
<text x="1323" y="616.9" text-anchor="end" class="ct">0</text>
<text x="1347" y="628" class="ct">Jan</text>
<text x="1393" y="628" class="ct">Feb</text>
<text x="1439" y="628" class="ct">Mar</text>
<text x="1485" y="628" class="ct">Apr</text>
<text x="1531" y="628" class="ct">May</text>
<text x="1577" y="628" class="ct">Jun</text>
<text x="1623" y="628" class="ct">Jul</text>
<text x="1669" y="628" class="ct">Aug</text>
<text x="1715" y="628" class="ct">Sep</text>
<text x="1761" y="628" class="ct">Oct</text>
<text x="1807" y="628" class="ct">Nov</text>
<text x="1853" y="628" class="ct">Dec</text>
<text x="1333" y="481" class="ctt">Entries by months</text>
<line x1="55" y1="657.5" x2="613" y2="657.5" stroke="#aaaaaa" stroke-width="1" shape-rendering="geometricPrecision"/>
<line x1="55" y1="673.38" x2="613" y2="673.38" stroke="#aaaaaa" stroke-width="1" shape-rendering="geometricPrecision"/>
<line x1="55" y1="689.25" x2="613" y2="689.25" stroke="#aaaaaa" stroke-width="1" shape-rendering="geometricPrecision"/>
<line x1="55" y1="705.12" x2="613" y2="705.12" stroke="#aaaaaa" stroke-width="1" shape-rendering="geometricPrecision"/>
<line x1="55" y1="721" x2="613" y2="721" stroke="#aaaaaa" stroke-width="1" shape-rendering="geometricPrecision"/>
<line x1="55" y1="736.88" x2="613" y2="736.88" stroke="#aaaaaa" stroke-width="1" shape-rendering="geometricPrecision"/>
<line x1="55" y1="752.75" x2="613" y2="752.75" stroke="#aaaaaa" stroke-width="1" shape-rendering="geometricPrecision"/>
<line x1="55" y1="768.62" x2="613" y2="768.62" stroke="#aaaaaa" stroke-width="1" shape-rendering="geometricPrecision"/>
<line x1="55" y1="784.5" x2="613" y2="784.5" stroke="#aaaaaa" stroke-width="1" shape-rendering="geometricPrecision"/>
<rect x="60" y="657" width="1" height="128" fill="#aaaaaa"/>
<rect x="246.5" y="703.7" width="8" height="80.3" fill="url(#gB)" stroke="#6f8edc" stroke-width="1"/>
<rect x="255.5" y="778.7" width="8" height="5.3" fill="url(#gO)" stroke="#e2603c" stroke-width="1"/>
<rect x="269.5" y="721.5" width="8" height="62.5" fill="url(#gB)" stroke="#6f8edc" stroke-width="1"/>
<rect x="278.5" y="780.2" width="8" height="3.8" fill="url(#gO)" stroke="#e2603c" stroke-width="1"/>
<rect x="292.5" y="700.2" width="8" height="83.8" fill="url(#gB)" stroke="#6f8edc" stroke-width="1"/>
<rect x="301.5" y="774.7" width="8" height="9.3" fill="url(#gO)" stroke="#e2603c" stroke-width="1"/>
<rect x="315.5" y="738.2" width="8" height="45.8" fill="url(#gB)" stroke="#6f8edc" stroke-width="1"/>
<rect x="324.5" y="778.3" width="8" height="5.7" fill="url(#gO)" stroke="#e2603c" stroke-width="1"/>
<rect x="338.5" y="707.7" width="8" height="76.3" fill="url(#gB)" stroke="#6f8edc" stroke-width="1"/>
<rect x="347.5" y="777.7" width="8" height="6.3" fill="url(#gO)" stroke="#e2603c" stroke-width="1"/>
<rect x="361.5" y="674.5" width="8" height="109.5" fill="url(#gB)" stroke="#6f8edc" stroke-width="1"/>
<rect x="370.5" y="750.3" width="8" height="33.7" fill="url(#gO)" stroke="#e2603c" stroke-width="1"/>
<rect x="384.5" y="668.7" width="8" height="115.3" fill="url(#gB)" stroke="#6f8edc" stroke-width="1"/>
<rect x="393.5" y="771.2" width="8" height="12.8" fill="url(#gO)" stroke="#e2603c" stroke-width="1"/>
<rect x="407.5" y="696.5" width="8" height="87.5" fill="url(#gB)" stroke="#6f8edc" stroke-width="1"/>
<rect x="416.5" y="773.2" width="8" height="10.8" fill="url(#gO)" stroke="#e2603c" stroke-width="1"/>
<rect x="55" y="784" width="558" height="1" fill="#aaaaaa"/>
<rect x="60" y="784" width="1" height="6" fill="#aaaaaa"/>
<rect x="83" y="784" width="1" height="6" fill="#aaaaaa"/>
<rect x="106" y="784" width="1" height="6" fill="#aaaaaa"/>
<rect x="129" y="784" width="1" height="6" fill="#aaaaaa"/>
<rect x="152" y="784" width="1" height="6" fill="#aaaaaa"/>
<rect x="175" y="784" width="1" height="6" fill="#aaaaaa"/>
<rect x="198" y="784" width="1" height="6" fill="#aaaaaa"/>
<rect x="221" y="784" width="1" height="6" fill="#aaaaaa"/>
<rect x="244" y="784" width="1" height="6" fill="#aaaaaa"/>
<rect x="267" y="784" width="1" height="6" fill="#aaaaaa"/>
<rect x="290" y="784" width="1" height="6" fill="#aaaaaa"/>
<rect x="313" y="784" width="1" height="6" fill="#aaaaaa"/>
<rect x="336" y="784" width="1" height="6" fill="#aaaaaa"/>
<rect x="359" y="784" width="1" height="6" fill="#aaaaaa"/>
<rect x="382" y="784" width="1" height="6" fill="#aaaaaa"/>
<rect x="405" y="784" width="1" height="6" fill="#aaaaaa"/>
<rect x="428" y="784" width="1" height="6" fill="#aaaaaa"/>
<rect x="451" y="784" width="1" height="6" fill="#aaaaaa"/>
<rect x="474" y="784" width="1" height="6" fill="#aaaaaa"/>
<rect x="497" y="784" width="1" height="6" fill="#aaaaaa"/>
<rect x="520" y="784" width="1" height="6" fill="#aaaaaa"/>
<rect x="543" y="784" width="1" height="6" fill="#aaaaaa"/>
<rect x="566" y="784" width="1" height="6" fill="#aaaaaa"/>
<rect x="589" y="784" width="1" height="6" fill="#aaaaaa"/>
<text x="49" y="660.9" text-anchor="end" class="ct">1100</text>
<text x="49" y="724.4" text-anchor="end" class="ct">550</text>
<text x="49" y="787.9" text-anchor="end" class="ct">0</text>
<text x="62.3" y="799" class="ct">0</text>
<text x="85.3" y="799" class="ct">1</text>
<text x="108.3" y="799" class="ct">2</text>
<text x="131.3" y="799" class="ct">3</text>
<text x="154.3" y="799" class="ct">4</text>
<text x="177.3" y="799" class="ct">5</text>
<text x="200.3" y="799" class="ct">6</text>
<text x="223.3" y="799" class="ct">7</text>
<text x="246.3" y="799" class="ct">8</text>
<text x="269.3" y="799" class="ct">9</text>
<text x="292.3" y="799" class="ct">10</text>
<text x="315.3" y="799" class="ct">11</text>
<text x="338.3" y="799" class="ct">12</text>
<text x="361.3" y="799" class="ct">13</text>
<text x="384.3" y="799" class="ct">14</text>
<text x="407.3" y="799" class="ct">15</text>
<text x="430.3" y="799" class="ct">16</text>
<text x="453.3" y="799" class="ct">17</text>
<text x="476.3" y="799" class="ct">18</text>
<text x="499.3" y="799" class="ct">19</text>
<text x="522.3" y="799" class="ct">20</text>
<text x="545.3" y="799" class="ct">21</text>
<text x="568.3" y="799" class="ct">22</text>
<text x="591.3" y="799" class="ct">23</text>
<text x="59" y="652" class="ctt">Profits and losses by hours</text>
<line x1="692" y1="657.5" x2="1237" y2="657.5" stroke="#aaaaaa" stroke-width="1" shape-rendering="geometricPrecision"/>
<line x1="692" y1="673.38" x2="1237" y2="673.38" stroke="#aaaaaa" stroke-width="1" shape-rendering="geometricPrecision"/>
<line x1="692" y1="689.25" x2="1237" y2="689.25" stroke="#aaaaaa" stroke-width="1" shape-rendering="geometricPrecision"/>
<line x1="692" y1="705.12" x2="1237" y2="705.12" stroke="#aaaaaa" stroke-width="1" shape-rendering="geometricPrecision"/>
<line x1="692" y1="721" x2="1237" y2="721" stroke="#aaaaaa" stroke-width="1" shape-rendering="geometricPrecision"/>
<line x1="692" y1="736.88" x2="1237" y2="736.88" stroke="#aaaaaa" stroke-width="1" shape-rendering="geometricPrecision"/>
<line x1="692" y1="752.75" x2="1237" y2="752.75" stroke="#aaaaaa" stroke-width="1" shape-rendering="geometricPrecision"/>
<line x1="692" y1="768.62" x2="1237" y2="768.62" stroke="#aaaaaa" stroke-width="1" shape-rendering="geometricPrecision"/>
<line x1="692" y1="784.5" x2="1237" y2="784.5" stroke="#aaaaaa" stroke-width="1" shape-rendering="geometricPrecision"/>
<rect x="697" y="657" width="1" height="128" fill="#aaaaaa"/>
<rect x="793.5" y="682.8" width="19" height="101.2" fill="url(#gB)" stroke="#6f8edc" stroke-width="1"/>
<rect x="813.5" y="772.2" width="19" height="11.8" fill="url(#gO)" stroke="#e2603c" stroke-width="1"/>
<rect x="870.5" y="684.8" width="19" height="99.2" fill="url(#gB)" stroke="#6f8edc" stroke-width="1"/>
<rect x="890.5" y="774.2" width="19" height="9.8" fill="url(#gO)" stroke="#e2603c" stroke-width="1"/>
<rect x="947.5" y="699.8" width="19" height="84.2" fill="url(#gB)" stroke="#6f8edc" stroke-width="1"/>
<rect x="967.5" y="763.5" width="19" height="20.5" fill="url(#gO)" stroke="#e2603c" stroke-width="1"/>
<rect x="1024.5" y="703.2" width="19" height="80.8" fill="url(#gB)" stroke="#6f8edc" stroke-width="1"/>
<rect x="1044.5" y="770.8" width="19" height="13.2" fill="url(#gO)" stroke="#e2603c" stroke-width="1"/>
<rect x="1101.5" y="663.8" width="19" height="120.2" fill="url(#gB)" stroke="#6f8edc" stroke-width="1"/>
<rect x="1121.5" y="774.5" width="19" height="9.5" fill="url(#gO)" stroke="#e2603c" stroke-width="1"/>
<rect x="692" y="784" width="545" height="1" fill="#aaaaaa"/>
<rect x="697" y="784" width="1" height="6" fill="#aaaaaa"/>
<rect x="774" y="784" width="1" height="6" fill="#aaaaaa"/>
<rect x="851" y="784" width="1" height="6" fill="#aaaaaa"/>
<rect x="928" y="784" width="1" height="6" fill="#aaaaaa"/>
<rect x="1005" y="784" width="1" height="6" fill="#aaaaaa"/>
<rect x="1082" y="784" width="1" height="6" fill="#aaaaaa"/>
<rect x="1159" y="784" width="1" height="6" fill="#aaaaaa"/>
<text x="686" y="660.9" text-anchor="end" class="ct">1500</text>
<text x="686" y="724.4" text-anchor="end" class="ct">750</text>
<text x="686" y="787.9" text-anchor="end" class="ct">0</text>
<text x="718.3" y="799" class="ct">Sun</text>
<text x="795.3" y="799" class="ct">Mon</text>
<text x="872.3" y="799" class="ct">Tue</text>
<text x="949.3" y="799" class="ct">Wed</text>
<text x="1026.3" y="799" class="ct">Thu</text>
<text x="1103.3" y="799" class="ct">Fri</text>
<text x="1180.3" y="799" class="ct">Sat</text>
<text x="696" y="652" class="ctt">Profits and losses by weekdays</text>
<line x1="1329" y1="657.5" x2="1887" y2="657.5" stroke="#aaaaaa" stroke-width="1" shape-rendering="geometricPrecision"/>
<line x1="1329" y1="673.38" x2="1887" y2="673.38" stroke="#aaaaaa" stroke-width="1" shape-rendering="geometricPrecision"/>
<line x1="1329" y1="689.25" x2="1887" y2="689.25" stroke="#aaaaaa" stroke-width="1" shape-rendering="geometricPrecision"/>
<line x1="1329" y1="705.12" x2="1887" y2="705.12" stroke="#aaaaaa" stroke-width="1" shape-rendering="geometricPrecision"/>
<line x1="1329" y1="721" x2="1887" y2="721" stroke="#aaaaaa" stroke-width="1" shape-rendering="geometricPrecision"/>
<line x1="1329" y1="736.88" x2="1887" y2="736.88" stroke="#aaaaaa" stroke-width="1" shape-rendering="geometricPrecision"/>
<line x1="1329" y1="752.75" x2="1887" y2="752.75" stroke="#aaaaaa" stroke-width="1" shape-rendering="geometricPrecision"/>
<line x1="1329" y1="768.62" x2="1887" y2="768.62" stroke="#aaaaaa" stroke-width="1" shape-rendering="geometricPrecision"/>
<line x1="1329" y1="784.5" x2="1887" y2="784.5" stroke="#aaaaaa" stroke-width="1" shape-rendering="geometricPrecision"/>
<rect x="1334" y="657" width="1" height="128" fill="#aaaaaa"/>
<rect x="1345.5" y="662.2" width="11" height="121.8" fill="url(#gB)" stroke="#6f8edc" stroke-width="1"/>
<rect x="1357.5" y="774.8" width="11" height="9.2" fill="url(#gO)" stroke="#e2603c" stroke-width="1"/>
<rect x="1391.5" y="680.5" width="11" height="103.5" fill="url(#gB)" stroke="#6f8edc" stroke-width="1"/>
<rect x="1403.5" y="764.8" width="11" height="19.2" fill="url(#gO)" stroke="#e2603c" stroke-width="1"/>
<rect x="1437.5" y="677.8" width="11" height="106.2" fill="url(#gB)" stroke="#6f8edc" stroke-width="1"/>
<rect x="1449.5" y="767.8" width="11" height="16.2" fill="url(#gO)" stroke="#e2603c" stroke-width="1"/>
<rect x="1329" y="784" width="558" height="1" fill="#aaaaaa"/>
<rect x="1334" y="784" width="1" height="6" fill="#aaaaaa"/>
<rect x="1380" y="784" width="1" height="6" fill="#aaaaaa"/>
<rect x="1426" y="784" width="1" height="6" fill="#aaaaaa"/>
<rect x="1472" y="784" width="1" height="6" fill="#aaaaaa"/>
<rect x="1518" y="784" width="1" height="6" fill="#aaaaaa"/>
<rect x="1564" y="784" width="1" height="6" fill="#aaaaaa"/>
<rect x="1610" y="784" width="1" height="6" fill="#aaaaaa"/>
<rect x="1656" y="784" width="1" height="6" fill="#aaaaaa"/>
<rect x="1702" y="784" width="1" height="6" fill="#aaaaaa"/>
<rect x="1748" y="784" width="1" height="6" fill="#aaaaaa"/>
<rect x="1794" y="784" width="1" height="6" fill="#aaaaaa"/>
<rect x="1840" y="784" width="1" height="6" fill="#aaaaaa"/>
<text x="1323" y="660.9" text-anchor="end" class="ct">2200</text>
<text x="1323" y="692.65" text-anchor="end" class="ct">1650</text>
<text x="1323" y="724.4" text-anchor="end" class="ct">1100</text>
<text x="1323" y="756.15" text-anchor="end" class="ct">550</text>
<text x="1323" y="787.9" text-anchor="end" class="ct">0</text>
<text x="1347" y="799" class="ct">Jan</text>
<text x="1393" y="799" class="ct">Feb</text>
<text x="1439" y="799" class="ct">Mar</text>
<text x="1485" y="799" class="ct">Apr</text>
<text x="1531" y="799" class="ct">May</text>
<text x="1577" y="799" class="ct">Jun</text>
<text x="1623" y="799" class="ct">Jul</text>
<text x="1669" y="799" class="ct">Aug</text>
<text x="1715" y="799" class="ct">Sep</text>
<text x="1761" y="799" class="ct">Oct</text>
<text x="1807" y="799" class="ct">Nov</text>
<text x="1853" y="799" class="ct">Dec</text>
<text x="1333" y="652" class="ctt">Profits and losses by months</text>
</svg>
<svg width="1920" height="1033" viewBox="0 0 1920 1033" style="font-family:'Liberation Sans',sans-serif">
<style>.ct{font-size:9.8px;fill:#000;letter-spacing:-0.42px}</style>
<g shape-rendering="crispEdges">
<rect x="55" y="858" width="1834" height="1" fill="#8c8c8c"/>
<text x="50" y="862.4" text-anchor="end" class="ct">170</text>
<rect x="55" y="876" width="1834" height="1" fill="#dcdcdc"/>
<text x="50" y="880.69" text-anchor="end" class="ct">136</text>
<rect x="55" y="895" width="1834" height="1" fill="#dcdcdc"/>
<text x="50" y="898.98" text-anchor="end" class="ct">102</text>
<rect x="55" y="913" width="1834" height="1" fill="#dcdcdc"/>
<text x="50" y="917.27" text-anchor="end" class="ct">68</text>
<rect x="55" y="931" width="1834" height="1" fill="#dcdcdc"/>
<text x="50" y="935.56" text-anchor="end" class="ct">34</text>
<rect x="55" y="949" width="1834" height="2" fill="#d0d0d0"/>
<text x="50" y="953.85" text-anchor="end" class="ct">0</text>
<rect x="55" y="968" width="1834" height="1" fill="#dcdcdc"/>
<text x="50" y="972.14" text-anchor="end" class="ct">-34</text>
<rect x="55" y="986" width="1834" height="1" fill="#dcdcdc"/>
<text x="50" y="990.43" text-anchor="end" class="ct">-68</text>
<rect x="55" y="1004" width="1834" height="1" fill="#dcdcdc"/>
<text x="50" y="1008.72" text-anchor="end" class="ct">-102</text>
<rect x="55" y="1023" width="1834" height="1" fill="#dcdcdc"/>
<text x="50" y="1027.01" text-anchor="end" class="ct">-136</text>
<rect x="234" y="858" width="1" height="175" fill="#dadada"/>
<rect x="408" y="858" width="1" height="175" fill="#dadada"/>
<rect x="581" y="858" width="1" height="175" fill="#dadada"/>
<rect x="755" y="858" width="1" height="175" fill="#dadada"/>
<rect x="929" y="858" width="1" height="175" fill="#dadada"/>
<rect x="1103" y="858" width="1" height="175" fill="#dadada"/>
<rect x="1277" y="858" width="1" height="175" fill="#dadada"/>
<rect x="1450" y="858" width="1" height="175" fill="#dadada"/>
<rect x="1624" y="858" width="1" height="175" fill="#dadada"/>
<rect x="1798" y="858" width="1" height="175" fill="#dadada"/>
<rect x="60" y="858" width="1" height="175" fill="#8c8c8c"/>
<rect x="1889" y="858" width="1" height="175" fill="#8c8c8c"/>
</g>
<text x="67" y="871" class="ct">Profit</text>
<text x="1862.5" y="1036" class="ct">MFE</text>
<path d="M60 953.1 L1770 886.5" stroke="#2f62c9" stroke-width="1.8" fill="none"/>
<g fill="#2f62c9">
<circle cx="69" cy="951.28" r="2.55"/>
<circle cx="69.72" cy="951.29" r="2.55"/>
<circle cx="70.28" cy="951.02" r="2.55"/>
<circle cx="70.86" cy="951.36" r="2.55"/>
<circle cx="71.2" cy="951.61" r="2.55"/>
<circle cx="71.52" cy="951.77" r="2.55"/>
<circle cx="72.12" cy="951.43" r="2.55"/>
<circle cx="72.42" cy="950.86" r="2.55"/>
<circle cx="72.83" cy="950.88" r="2.55"/>
<circle cx="73.33" cy="951.64" r="2.55"/>
<circle cx="73.92" cy="951.31" r="2.55"/>
<circle cx="74.43" cy="951.11" r="2.55"/>
<circle cx="75.17" cy="951.63" r="2.55"/>
<circle cx="75.62" cy="951.06" r="2.55"/>
<circle cx="75.95" cy="951.56" r="2.55"/>
<circle cx="76.63" cy="951.2" r="2.55"/>
<circle cx="77.31" cy="950.85" r="2.55"/>
<circle cx="78.02" cy="951.28" r="2.55"/>
<circle cx="78.5" cy="950.91" r="2.55"/>
<circle cx="79.15" cy="950.92" r="2.55"/>
<circle cx="79.88" cy="951.18" r="2.55"/>
<circle cx="80.23" cy="950.9" r="2.55"/>
<circle cx="80.61" cy="951.35" r="2.55"/>
<circle cx="80.99" cy="951.51" r="2.55"/>
<circle cx="81.58" cy="950.95" r="2.55"/>
<circle cx="81.98" cy="951.08" r="2.55"/>
<circle cx="82.64" cy="951.11" r="2.55"/>
<circle cx="83.03" cy="951.19" r="2.55"/>
<circle cx="83.62" cy="950.93" r="2.55"/>
<circle cx="84.02" cy="951.07" r="2.55"/>
<circle cx="84.47" cy="950.4" r="2.55"/>
<circle cx="85.03" cy="951.05" r="2.55"/>
<circle cx="85.5" cy="951.24" r="2.55"/>
<circle cx="86.01" cy="951.35" r="2.55"/>
<circle cx="86.4" cy="950.97" r="2.55"/>
<circle cx="87.07" cy="951.05" r="2.55"/>
<circle cx="87.7" cy="951.67" r="2.55"/>
<circle cx="88.43" cy="951.62" r="2.55"/>
<circle cx="88.92" cy="952.13" r="2.55"/>
<circle cx="89.32" cy="951.45" r="2.55"/>
<circle cx="89.99" cy="951.35" r="2.55"/>
<circle cx="90.37" cy="951.06" r="2.55"/>
<circle cx="90.92" cy="951.58" r="2.55"/>
<circle cx="91.35" cy="951.64" r="2.55"/>
<circle cx="91.66" cy="951.05" r="2.55"/>
<circle cx="91.98" cy="950.96" r="2.55"/>
<circle cx="92.54" cy="950.92" r="2.55"/>
<circle cx="93.24" cy="951.69" r="2.55"/>
<circle cx="93.85" cy="951.33" r="2.55"/>
<circle cx="94.17" cy="950.81" r="2.55"/>
<circle cx="94.79" cy="952.16" r="2.55"/>
<circle cx="95.3" cy="951.45" r="2.55"/>
<circle cx="96.05" cy="950.85" r="2.55"/>
<circle cx="96.68" cy="951.6" r="2.55"/>
<circle cx="97.3" cy="951.5" r="2.55"/>
<circle cx="97.76" cy="951.4" r="2.55"/>
<circle cx="98.45" cy="951.15" r="2.55"/>
<circle cx="99.14" cy="951.29" r="2.55"/>
<circle cx="99.61" cy="951.3" r="2.55"/>
<circle cx="99.95" cy="951.35" r="2.55"/>
<circle cx="100.64" cy="951.42" r="2.55"/>
<circle cx="101.27" cy="951.29" r="2.55"/>
<circle cx="101.95" cy="950.83" r="2.55"/>
<circle cx="102.26" cy="951.3" r="2.55"/>
<circle cx="102.67" cy="951.39" r="2.55"/>
<circle cx="103.24" cy="951.59" r="2.55"/>
<circle cx="103.55" cy="951.02" r="2.55"/>
<circle cx="103.94" cy="950.89" r="2.55"/>
<circle cx="104.54" cy="951.14" r="2.55"/>
<circle cx="104.99" cy="951.35" r="2.55"/>
<circle cx="105.48" cy="951.47" r="2.55"/>
<circle cx="106.18" cy="951.08" r="2.55"/>
<circle cx="106.62" cy="950.84" r="2.55"/>
<circle cx="107.29" cy="951.5" r="2.55"/>
<circle cx="108.02" cy="950.96" r="2.55"/>
<circle cx="108.52" cy="950.96" r="2.55"/>
<circle cx="109.01" cy="951.29" r="2.55"/>
<circle cx="109.45" cy="951.49" r="2.55"/>
<circle cx="109.96" cy="951.77" r="2.55"/>
<circle cx="110.27" cy="951.36" r="2.55"/>
<circle cx="110.71" cy="950.83" r="2.55"/>
<circle cx="111.22" cy="950.69" r="2.55"/>
<circle cx="111.63" cy="951.29" r="2.55"/>
<circle cx="112.13" cy="951.27" r="2.55"/>
<circle cx="112.79" cy="951.58" r="2.55"/>
<circle cx="113.18" cy="951.11" r="2.55"/>
<circle cx="113.48" cy="951.11" r="2.55"/>
<circle cx="113.86" cy="950.91" r="2.55"/>
<circle cx="114.48" cy="951.15" r="2.55"/>
<circle cx="115.12" cy="951.02" r="2.55"/>
<circle cx="115.83" cy="950.71" r="2.55"/>
<circle cx="116.45" cy="950.75" r="2.55"/>
<circle cx="117.03" cy="951.52" r="2.55"/>
<circle cx="117.59" cy="951.48" r="2.55"/>
<circle cx="118.31" cy="951.06" r="2.55"/>
<circle cx="118.71" cy="951.32" r="2.55"/>
<circle cx="119.3" cy="951.31" r="2.55"/>
<circle cx="120" cy="951.58" r="2.55"/>
<circle cx="120.54" cy="951.38" r="2.55"/>
<circle cx="121.25" cy="951.44" r="2.55"/>
<circle cx="121.59" cy="951.01" r="2.55"/>
<circle cx="122.23" cy="951.93" r="2.55"/>
<circle cx="122.56" cy="951.38" r="2.55"/>
<circle cx="123.01" cy="951.36" r="2.55"/>
<circle cx="123.38" cy="951.07" r="2.55"/>
<circle cx="124.06" cy="951.25" r="2.55"/>
<circle cx="124.58" cy="951.11" r="2.55"/>
<circle cx="125.12" cy="950.82" r="2.55"/>
<circle cx="125.7" cy="951.06" r="2.55"/>
<circle cx="126.26" cy="950.83" r="2.55"/>
<circle cx="126.94" cy="951.46" r="2.55"/>
<circle cx="127.62" cy="951.53" r="2.55"/>
<circle cx="128.18" cy="950.68" r="2.55"/>
<circle cx="128.7" cy="952.36" r="2.55"/>
<circle cx="129.24" cy="950.89" r="2.55"/>
<circle cx="129.79" cy="950.99" r="2.55"/>
<circle cx="130.12" cy="951.04" r="2.55"/>
<circle cx="130.85" cy="951.47" r="2.55"/>
<circle cx="131.36" cy="950.56" r="2.55"/>
<circle cx="132.03" cy="951.43" r="2.55"/>
<circle cx="132.47" cy="950.61" r="2.55"/>
<circle cx="133.19" cy="950.53" r="2.55"/>
<circle cx="133.5" cy="950.6" r="2.55"/>
<circle cx="134.11" cy="950.74" r="2.55"/>
<circle cx="134.69" cy="950.48" r="2.55"/>
<circle cx="135.04" cy="950.96" r="2.55"/>
<circle cx="135.43" cy="950.97" r="2.55"/>
<circle cx="135.9" cy="950.83" r="2.55"/>
<circle cx="136.27" cy="950.57" r="2.55"/>
<circle cx="136.86" cy="950.96" r="2.55"/>
<circle cx="137.44" cy="951.35" r="2.55"/>
<circle cx="138.07" cy="951.29" r="2.55"/>
<circle cx="138.51" cy="950.68" r="2.55"/>
<circle cx="138.91" cy="951.52" r="2.55"/>
<circle cx="139.27" cy="950.57" r="2.55"/>
<circle cx="139.69" cy="950.39" r="2.55"/>
<circle cx="140.18" cy="951.25" r="2.55"/>
<circle cx="140.66" cy="950.66" r="2.55"/>
<circle cx="141.26" cy="951.4" r="2.55"/>
<circle cx="141.62" cy="950.88" r="2.55"/>
<circle cx="142.14" cy="951.1" r="2.55"/>
<circle cx="142.47" cy="950.66" r="2.55"/>
<circle cx="143.01" cy="950.94" r="2.55"/>
<circle cx="143.39" cy="950.46" r="2.55"/>
<circle cx="144.13" cy="950.64" r="2.55"/>
<circle cx="144.86" cy="950.78" r="2.55"/>
<circle cx="145.31" cy="950.78" r="2.55"/>
<circle cx="145.8" cy="951.6" r="2.55"/>
<circle cx="146.48" cy="950.37" r="2.55"/>
<circle cx="147.12" cy="950.67" r="2.55"/>
<circle cx="147.49" cy="951.88" r="2.55"/>
<circle cx="148.15" cy="951.07" r="2.55"/>
<circle cx="148.73" cy="950.65" r="2.55"/>
<circle cx="149.26" cy="951.45" r="2.55"/>
<circle cx="149.68" cy="951.35" r="2.55"/>
<circle cx="150.33" cy="951.21" r="2.55"/>
<circle cx="151.03" cy="951.3" r="2.55"/>
<circle cx="151.68" cy="951.13" r="2.55"/>
<circle cx="152.3" cy="950.1" r="2.55"/>
<circle cx="152.81" cy="950" r="2.55"/>
<circle cx="153.4" cy="950.9" r="2.55"/>
<circle cx="154.12" cy="950.96" r="2.55"/>
<circle cx="154.72" cy="950.8" r="2.55"/>
<circle cx="155.2" cy="951.46" r="2.55"/>
<circle cx="155.81" cy="951.09" r="2.55"/>
<circle cx="156.12" cy="950.86" r="2.55"/>
<circle cx="156.54" cy="950.05" r="2.55"/>
<circle cx="157.01" cy="950.04" r="2.55"/>
<circle cx="157.71" cy="950.73" r="2.55"/>
<circle cx="158.45" cy="950.75" r="2.55"/>
<circle cx="159.04" cy="951.55" r="2.55"/>
<circle cx="159.68" cy="949.89" r="2.55"/>
<circle cx="160.05" cy="950.57" r="2.55"/>
<circle cx="160.57" cy="951.97" r="2.55"/>
<circle cx="161.06" cy="950.65" r="2.55"/>
<circle cx="161.53" cy="950.24" r="2.55"/>
<circle cx="162.08" cy="950.22" r="2.55"/>
<circle cx="162.51" cy="949.76" r="2.55"/>
<circle cx="162.83" cy="949.99" r="2.55"/>
<circle cx="163.31" cy="951.25" r="2.55"/>
<circle cx="163.63" cy="951.4" r="2.55"/>
<circle cx="163.96" cy="951.26" r="2.55"/>
<circle cx="164.48" cy="951.37" r="2.55"/>
<circle cx="165.01" cy="951.31" r="2.55"/>
<circle cx="165.52" cy="951.38" r="2.55"/>
<circle cx="166.1" cy="949.84" r="2.55"/>
<circle cx="166.6" cy="950.25" r="2.55"/>
<circle cx="166.96" cy="950.41" r="2.55"/>
<circle cx="167.46" cy="950.07" r="2.55"/>
<circle cx="167.95" cy="951" r="2.55"/>
<circle cx="168.7" cy="951.31" r="2.55"/>
<circle cx="169.11" cy="949.76" r="2.55"/>
<circle cx="169.76" cy="950.7" r="2.55"/>
<circle cx="170.18" cy="950.8" r="2.55"/>
<circle cx="170.75" cy="950.7" r="2.55"/>
<circle cx="171.13" cy="949.96" r="2.55"/>
<circle cx="171.85" cy="950.39" r="2.55"/>
<circle cx="172.27" cy="950.27" r="2.55"/>
<circle cx="172.61" cy="949.78" r="2.55"/>
<circle cx="173.22" cy="950.5" r="2.55"/>
<circle cx="173.69" cy="950.35" r="2.55"/>
<circle cx="174.14" cy="950.87" r="2.55"/>
<circle cx="174.47" cy="949.62" r="2.55"/>
<circle cx="175.06" cy="950.91" r="2.55"/>
<circle cx="175.55" cy="949.87" r="2.55"/>
<circle cx="176.01" cy="950.67" r="2.55"/>
<circle cx="176.46" cy="950.44" r="2.55"/>
<circle cx="177.17" cy="950.18" r="2.55"/>
<circle cx="177.52" cy="950.39" r="2.55"/>
<circle cx="178.07" cy="950.28" r="2.55"/>
<circle cx="178.51" cy="950.46" r="2.55"/>
<circle cx="179.1" cy="949.4" r="2.55"/>
<circle cx="179.73" cy="950.7" r="2.55"/>
<circle cx="180.09" cy="949.97" r="2.55"/>
<circle cx="180.56" cy="949.43" r="2.55"/>
<circle cx="181.11" cy="951.17" r="2.55"/>
<circle cx="181.83" cy="950.1" r="2.55"/>
<circle cx="182.26" cy="949.83" r="2.55"/>
<circle cx="182.98" cy="951.11" r="2.55"/>
<circle cx="183.45" cy="949.91" r="2.55"/>
<circle cx="183.92" cy="949.94" r="2.55"/>
<circle cx="184.48" cy="950.87" r="2.55"/>
<circle cx="185.15" cy="950.32" r="2.55"/>
<circle cx="185.8" cy="951.05" r="2.55"/>
<circle cx="186.11" cy="950.19" r="2.55"/>
<circle cx="186.66" cy="951.25" r="2.55"/>
<circle cx="187.32" cy="949.09" r="2.55"/>
<circle cx="187.98" cy="949.84" r="2.55"/>
<circle cx="188.68" cy="949.09" r="2.55"/>
<circle cx="189.05" cy="950.7" r="2.55"/>
<circle cx="189.46" cy="949.4" r="2.55"/>
<circle cx="189.99" cy="950.73" r="2.55"/>
<circle cx="190.44" cy="951.24" r="2.55"/>
<circle cx="190.97" cy="950.15" r="2.55"/>
<circle cx="191.58" cy="951.09" r="2.55"/>
<circle cx="192.26" cy="950.45" r="2.55"/>
<circle cx="192.92" cy="950.88" r="2.55"/>
<circle cx="193.65" cy="950.36" r="2.55"/>
<circle cx="194.27" cy="950.78" r="2.55"/>
<circle cx="194.76" cy="949.04" r="2.55"/>
<circle cx="195.51" cy="949.62" r="2.55"/>
<circle cx="195.9" cy="949.75" r="2.55"/>
<circle cx="196.63" cy="948.73" r="2.55"/>
<circle cx="196.99" cy="950.33" r="2.55"/>
<circle cx="197.37" cy="948.71" r="2.55"/>
<circle cx="197.93" cy="950.37" r="2.55"/>
<circle cx="198.31" cy="949.11" r="2.55"/>
<circle cx="198.93" cy="950.14" r="2.55"/>
<circle cx="199.32" cy="949.25" r="2.55"/>
<circle cx="199.96" cy="949.32" r="2.55"/>
<circle cx="200.63" cy="949.78" r="2.55"/>
<circle cx="201.33" cy="951.02" r="2.55"/>
<circle cx="201.87" cy="951.14" r="2.55"/>
<circle cx="202.27" cy="948.48" r="2.55"/>
<circle cx="202.93" cy="949.45" r="2.55"/>
<circle cx="203.46" cy="949.1" r="2.55"/>
<circle cx="204.06" cy="949.11" r="2.55"/>
<circle cx="204.53" cy="950.64" r="2.55"/>
<circle cx="205.1" cy="948.69" r="2.55"/>
<circle cx="205.54" cy="948.99" r="2.55"/>
<circle cx="206.08" cy="950.13" r="2.55"/>
<circle cx="206.5" cy="949.81" r="2.55"/>
<circle cx="207.14" cy="948.12" r="2.55"/>
<circle cx="207.82" cy="950.38" r="2.55"/>
<circle cx="208.45" cy="948.37" r="2.55"/>
<circle cx="208.96" cy="951.1" r="2.55"/>
<circle cx="209.64" cy="948.99" r="2.55"/>
<circle cx="210.13" cy="951.88" r="2.55"/>
<circle cx="210.53" cy="949.74" r="2.55"/>
<circle cx="210.9" cy="950.68" r="2.55"/>
<circle cx="211.34" cy="948.18" r="2.55"/>
<circle cx="211.85" cy="950.28" r="2.55"/>
<circle cx="212.46" cy="948.23" r="2.55"/>
<circle cx="212.96" cy="951.11" r="2.55"/>
<circle cx="213.56" cy="947.86" r="2.55"/>
<circle cx="214.18" cy="948.6" r="2.55"/>
<circle cx="214.68" cy="947.8" r="2.55"/>
<circle cx="215.34" cy="948.45" r="2.55"/>
<circle cx="215.77" cy="949.03" r="2.55"/>
<circle cx="216.21" cy="948.88" r="2.55"/>
<circle cx="216.81" cy="948.57" r="2.55"/>
<circle cx="217.44" cy="948.81" r="2.55"/>
<circle cx="217.99" cy="950.21" r="2.55"/>
<circle cx="218.66" cy="947.9" r="2.55"/>
<circle cx="219" cy="950.02" r="2.55"/>
<circle cx="219.39" cy="949.01" r="2.55"/>
<circle cx="219.95" cy="947.83" r="2.55"/>
<circle cx="220.32" cy="947.94" r="2.55"/>
<circle cx="220.66" cy="950.9" r="2.55"/>
<circle cx="221.19" cy="949.87" r="2.55"/>
<circle cx="221.86" cy="948.86" r="2.55"/>
<circle cx="222.34" cy="947.44" r="2.55"/>
<circle cx="222.96" cy="951.11" r="2.55"/>
<circle cx="223.55" cy="949.5" r="2.55"/>
<circle cx="224.01" cy="949.75" r="2.55"/>
<circle cx="224.54" cy="950.35" r="2.55"/>
<circle cx="225.11" cy="947.86" r="2.55"/>
<circle cx="225.82" cy="949.38" r="2.55"/>
<circle cx="226.34" cy="947.73" r="2.55"/>
<circle cx="227.09" cy="949.21" r="2.55"/>
<circle cx="227.76" cy="947.89" r="2.55"/>
<circle cx="228.35" cy="947.51" r="2.55"/>
<circle cx="228.9" cy="949.91" r="2.55"/>
<circle cx="229.62" cy="948.49" r="2.55"/>
<circle cx="229.98" cy="951.05" r="2.55"/>
<circle cx="230.69" cy="949.22" r="2.55"/>
<circle cx="231.24" cy="948.02" r="2.55"/>
<circle cx="231.98" cy="950.36" r="2.55"/>
<circle cx="232.34" cy="950.39" r="2.55"/>
<circle cx="233.04" cy="947.84" r="2.55"/>
<circle cx="233.72" cy="947.57" r="2.55"/>
<circle cx="234.05" cy="946.88" r="2.55"/>
<circle cx="234.79" cy="950.87" r="2.55"/>
<circle cx="235.23" cy="949.67" r="2.55"/>
<circle cx="235.71" cy="949.3" r="2.55"/>
<circle cx="236.01" cy="947.52" r="2.55"/>
<circle cx="236.38" cy="948.35" r="2.55"/>
<circle cx="236.75" cy="948.94" r="2.55"/>
<circle cx="237.31" cy="948.07" r="2.55"/>
<circle cx="237.63" cy="949.61" r="2.55"/>
<circle cx="238.36" cy="949.27" r="2.55"/>
<circle cx="238.84" cy="949.37" r="2.55"/>
<circle cx="239.49" cy="949.95" r="2.55"/>
<circle cx="240.23" cy="950.35" r="2.55"/>
<circle cx="240.72" cy="948.41" r="2.55"/>
<circle cx="241.42" cy="948.83" r="2.55"/>
<circle cx="241.92" cy="950.65" r="2.55"/>
<circle cx="242.24" cy="949.77" r="2.55"/>
<circle cx="242.87" cy="949.14" r="2.55"/>
<circle cx="243.31" cy="948.48" r="2.55"/>
<circle cx="243.81" cy="948.64" r="2.55"/>
<circle cx="244.13" cy="949.59" r="2.55"/>
<circle cx="244.54" cy="947.64" r="2.55"/>
<circle cx="244.95" cy="946.43" r="2.55"/>
<circle cx="245.68" cy="949.4" r="2.55"/>
<circle cx="246.17" cy="950.1" r="2.55"/>
<circle cx="246.81" cy="948.87" r="2.55"/>
<circle cx="247.15" cy="950.02" r="2.55"/>
<circle cx="247.7" cy="950.47" r="2.55"/>
<circle cx="248.13" cy="948.64" r="2.55"/>
<circle cx="248.8" cy="947.92" r="2.55"/>
<circle cx="249.36" cy="947.13" r="2.55"/>
<circle cx="249.8" cy="948.42" r="2.55"/>
<circle cx="250.54" cy="948.26" r="2.55"/>
<circle cx="250.97" cy="950.66" r="2.55"/>
<circle cx="251.36" cy="950.2" r="2.55"/>
<circle cx="251.87" cy="946.58" r="2.55"/>
<circle cx="252.62" cy="946.7" r="2.55"/>
<circle cx="253.01" cy="949.74" r="2.55"/>
<circle cx="253.63" cy="947.26" r="2.55"/>
<circle cx="254.32" cy="949.46" r="2.55"/>
<circle cx="254.94" cy="950.71" r="2.55"/>
<circle cx="255.27" cy="946.68" r="2.55"/>
<circle cx="255.89" cy="946.49" r="2.55"/>
<circle cx="256.3" cy="949.14" r="2.55"/>
<circle cx="256.77" cy="949.11" r="2.55"/>
<circle cx="257.33" cy="946.6" r="2.55"/>
<circle cx="258.05" cy="949.11" r="2.55"/>
<circle cx="258.64" cy="945.72" r="2.55"/>
<circle cx="259.13" cy="948.26" r="2.55"/>
<circle cx="259.46" cy="948.67" r="2.55"/>
<circle cx="259.87" cy="949.6" r="2.55"/>
<circle cx="260.51" cy="946.53" r="2.55"/>
<circle cx="261.05" cy="946.14" r="2.55"/>
<circle cx="261.8" cy="945.17" r="2.55"/>
<circle cx="262.44" cy="947.27" r="2.55"/>
<circle cx="262.96" cy="945.99" r="2.55"/>
<circle cx="263.55" cy="947.07" r="2.55"/>
<circle cx="264.2" cy="948.01" r="2.55"/>
<circle cx="264.89" cy="949.04" r="2.55"/>
<circle cx="265.61" cy="945.8" r="2.55"/>
<circle cx="265.99" cy="948.53" r="2.55"/>
<circle cx="266.49" cy="949.56" r="2.55"/>
<circle cx="267.14" cy="946.1" r="2.55"/>
<circle cx="267.54" cy="948.3" r="2.55"/>
<circle cx="267.86" cy="948.4" r="2.55"/>
<circle cx="268.41" cy="950.18" r="2.55"/>
<circle cx="268.78" cy="944.59" r="2.55"/>
<circle cx="269.28" cy="947.33" r="2.55"/>
<circle cx="269.94" cy="944.86" r="2.55"/>
<circle cx="270.49" cy="947.96" r="2.55"/>
<circle cx="270.9" cy="945.29" r="2.55"/>
<circle cx="271.22" cy="946.4" r="2.55"/>
<circle cx="271.76" cy="946.03" r="2.55"/>
<circle cx="272.1" cy="949.77" r="2.55"/>
<circle cx="272.51" cy="945.28" r="2.55"/>
<circle cx="273.19" cy="949.53" r="2.55"/>
<circle cx="273.65" cy="945.59" r="2.55"/>
<circle cx="273.97" cy="947.46" r="2.55"/>
<circle cx="274.71" cy="945.03" r="2.55"/>
<circle cx="275.35" cy="944.25" r="2.55"/>
<circle cx="276.05" cy="944.92" r="2.55"/>
<circle cx="276.48" cy="946.07" r="2.55"/>
<circle cx="277.23" cy="949.28" r="2.55"/>
<circle cx="277.63" cy="945.61" r="2.55"/>
<circle cx="278.04" cy="947.09" r="2.55"/>
<circle cx="278.51" cy="946.17" r="2.55"/>
<circle cx="279.08" cy="943.98" r="2.55"/>
<circle cx="279.67" cy="944.07" r="2.55"/>
<circle cx="280.29" cy="949.96" r="2.55"/>
<circle cx="280.98" cy="946.97" r="2.55"/>
<circle cx="281.66" cy="946.33" r="2.55"/>
<circle cx="282.06" cy="946.06" r="2.55"/>
<circle cx="282.61" cy="944.64" r="2.55"/>
<circle cx="283" cy="946.92" r="2.55"/>
<circle cx="283.51" cy="950.89" r="2.55"/>
<circle cx="284.19" cy="944.85" r="2.55"/>
<circle cx="284.53" cy="948.57" r="2.55"/>
<circle cx="284.95" cy="943.36" r="2.55"/>
<circle cx="285.37" cy="946.23" r="2.55"/>
<circle cx="285.99" cy="945.23" r="2.55"/>
<circle cx="286.36" cy="950.43" r="2.55"/>
<circle cx="287" cy="948.75" r="2.55"/>
<circle cx="287.31" cy="945.57" r="2.55"/>
<circle cx="287.65" cy="949.99" r="2.55"/>
<circle cx="288.3" cy="947.05" r="2.55"/>
<circle cx="288.7" cy="943.24" r="2.55"/>
<circle cx="289.27" cy="943.12" r="2.55"/>
<circle cx="289.76" cy="947.23" r="2.55"/>
<circle cx="290.38" cy="944.89" r="2.55"/>
<circle cx="290.98" cy="943.93" r="2.55"/>
<circle cx="291.41" cy="948.55" r="2.55"/>
<circle cx="291.88" cy="949.8" r="2.55"/>
<circle cx="292.31" cy="945.47" r="2.55"/>
<circle cx="292.63" cy="942.78" r="2.55"/>
<circle cx="293.19" cy="949.3" r="2.55"/>
<circle cx="293.62" cy="948.13" r="2.55"/>
<circle cx="294.02" cy="948.28" r="2.55"/>
<circle cx="294.75" cy="949.78" r="2.55"/>
<circle cx="295.33" cy="943.12" r="2.55"/>
<circle cx="295.81" cy="942.82" r="2.55"/>
<circle cx="296.26" cy="946.55" r="2.55"/>
<circle cx="296.63" cy="945.72" r="2.55"/>
<circle cx="297" cy="947.98" r="2.55"/>
<circle cx="297.34" cy="945.15" r="2.55"/>
<circle cx="297.71" cy="947.24" r="2.55"/>
<circle cx="298.26" cy="948.21" r="2.55"/>
<circle cx="298.73" cy="942.61" r="2.55"/>
<circle cx="299.05" cy="946.41" r="2.55"/>
<circle cx="299.56" cy="944.88" r="2.55"/>
<circle cx="299.87" cy="945.05" r="2.55"/>
<circle cx="300" cy="944.52" r="2.55"/>
<circle cx="301.47" cy="943.72" r="2.55"/>
<circle cx="302.68" cy="947.88" r="2.55"/>
<circle cx="304.52" cy="945.33" r="2.55"/>
<circle cx="305.87" cy="950.96" r="2.55"/>
<circle cx="307.47" cy="947.81" r="2.55"/>
<circle cx="308.88" cy="945.63" r="2.55"/>
<circle cx="310.02" cy="944.27" r="2.55"/>
<circle cx="311.7" cy="950.12" r="2.55"/>
<circle cx="312.79" cy="950.37" r="2.55"/>
<circle cx="313.44" cy="942.76" r="2.55"/>
<circle cx="314.7" cy="944.4" r="2.55"/>
<circle cx="315.77" cy="950.91" r="2.55"/>
<circle cx="316.57" cy="943.19" r="2.55"/>
<circle cx="317.46" cy="947.94" r="2.55"/>
<circle cx="318.37" cy="941.25" r="2.55"/>
<circle cx="319.67" cy="945.05" r="2.55"/>
<circle cx="320.59" cy="945.99" r="2.55"/>
<circle cx="322.03" cy="946.47" r="2.55"/>
<circle cx="323.44" cy="946.54" r="2.55"/>
<circle cx="325.12" cy="950.47" r="2.55"/>
<circle cx="326.16" cy="944.33" r="2.55"/>
<circle cx="327.91" cy="943.94" r="2.55"/>
<circle cx="329.44" cy="947.62" r="2.55"/>
<circle cx="330.93" cy="950.19" r="2.55"/>
<circle cx="332.6" cy="942.25" r="2.55"/>
<circle cx="334.01" cy="945.44" r="2.55"/>
<circle cx="335.35" cy="944.2" r="2.55"/>
<circle cx="336.32" cy="947.88" r="2.55"/>
<circle cx="337.61" cy="942.81" r="2.55"/>
<circle cx="338.53" cy="943.64" r="2.55"/>
<circle cx="339.37" cy="945.45" r="2.55"/>
<circle cx="340.13" cy="941.01" r="2.55"/>
<circle cx="340.82" cy="941.36" r="2.55"/>
<circle cx="342.34" cy="941.41" r="2.55"/>
<circle cx="343.52" cy="947.82" r="2.55"/>
<circle cx="344.75" cy="941.8" r="2.55"/>
<circle cx="346.47" cy="948.67" r="2.55"/>
<circle cx="347.14" cy="942.6" r="2.55"/>
<circle cx="348.4" cy="947.87" r="2.55"/>
<circle cx="349.51" cy="947.04" r="2.55"/>
<circle cx="350.44" cy="947" r="2.55"/>
<circle cx="351.46" cy="943.22" r="2.55"/>
<circle cx="353.05" cy="948.14" r="2.55"/>
<circle cx="354.73" cy="945.38" r="2.55"/>
<circle cx="355.88" cy="946.7" r="2.55"/>
<circle cx="357.29" cy="947.87" r="2.55"/>
<circle cx="358.93" cy="940.88" r="2.55"/>
<circle cx="360.02" cy="946.17" r="2.55"/>
<circle cx="360.92" cy="941.39" r="2.55"/>
<circle cx="361.54" cy="945.29" r="2.55"/>
<circle cx="363.36" cy="949" r="2.55"/>
<circle cx="364.13" cy="946.19" r="2.55"/>
<circle cx="365.28" cy="945.6" r="2.55"/>
<circle cx="366.39" cy="948.51" r="2.55"/>
<circle cx="368.28" cy="939.77" r="2.55"/>
<circle cx="369.81" cy="940.39" r="2.55"/>
<circle cx="370.46" cy="942.01" r="2.55"/>
<circle cx="372.01" cy="948.89" r="2.55"/>
<circle cx="372.77" cy="942.35" r="2.55"/>
<circle cx="373.4" cy="944.41" r="2.55"/>
<circle cx="374.63" cy="942.71" r="2.55"/>
<circle cx="375.63" cy="946.85" r="2.55"/>
<circle cx="377.32" cy="941.72" r="2.55"/>
<circle cx="378.43" cy="944.95" r="2.55"/>
<circle cx="380.03" cy="948.45" r="2.55"/>
<circle cx="381.13" cy="945.59" r="2.55"/>
<circle cx="382.44" cy="946.58" r="2.55"/>
<circle cx="383.23" cy="940.43" r="2.55"/>
<circle cx="383.97" cy="947.83" r="2.55"/>
<circle cx="384.9" cy="943.43" r="2.55"/>
<circle cx="385.66" cy="941.79" r="2.55"/>
<circle cx="386.28" cy="944.14" r="2.55"/>
<circle cx="387.07" cy="944.69" r="2.55"/>
<circle cx="388.02" cy="940.75" r="2.55"/>
<circle cx="389.25" cy="942.06" r="2.55"/>
<circle cx="390.19" cy="938.94" r="2.55"/>
<circle cx="390.87" cy="947.16" r="2.55"/>
<circle cx="391.87" cy="939.14" r="2.55"/>
<circle cx="392.71" cy="943.08" r="2.55"/>
<circle cx="394.61" cy="940.25" r="2.55"/>
<circle cx="396.34" cy="942.95" r="2.55"/>
<circle cx="397.47" cy="946.06" r="2.55"/>
<circle cx="398.59" cy="938.68" r="2.55"/>
<circle cx="399.9" cy="944.5" r="2.55"/>
<circle cx="401.31" cy="940.72" r="2.55"/>
<circle cx="403.14" cy="946.41" r="2.55"/>
<circle cx="405.03" cy="942.21" r="2.55"/>
<circle cx="406.71" cy="944.9" r="2.55"/>
<circle cx="407.54" cy="938.03" r="2.55"/>
<circle cx="408.36" cy="938.9" r="2.55"/>
<circle cx="409.06" cy="941.22" r="2.55"/>
<circle cx="63" cy="1016" r="2.55"/>
<circle cx="121.5" cy="975.2" r="2.55"/>
<circle cx="156.8" cy="962.2" r="2.55"/>
<circle cx="113.2" cy="957.7" r="2.55"/>
<circle cx="103" cy="954.9" r="2.55"/>
<circle cx="189.3" cy="956.7" r="2.55"/>
<circle cx="222.7" cy="957" r="2.55"/>
<circle cx="247.7" cy="956.7" r="2.55"/>
<circle cx="263.5" cy="958.5" r="2.55"/>
<circle cx="272.2" cy="959.5" r="2.55"/>
<circle cx="298.7" cy="963.3" r="2.55"/>
<circle cx="419.3" cy="948.7" r="2.55"/>
<circle cx="416" cy="945.3" r="2.55"/>
<circle cx="400.2" cy="945.8" r="2.55"/>
<circle cx="405" cy="945.8" r="2.55"/>
<circle cx="382.7" cy="945" r="2.55"/>
<circle cx="386" cy="945.5" r="2.55"/>
<circle cx="424.3" cy="935.8" r="2.55"/>
<circle cx="418.8" cy="937" r="2.55"/>
<circle cx="412.7" cy="937" r="2.55"/>
<circle cx="406" cy="937.5" r="2.55"/>
<circle cx="411" cy="940" r="2.55"/>
<circle cx="429.3" cy="945" r="2.55"/>
<circle cx="433.5" cy="943.7" r="2.55"/>
<circle cx="431.8" cy="935.8" r="2.55"/>
<circle cx="434.3" cy="937" r="2.55"/>
<circle cx="429.3" cy="941.2" r="2.55"/>
<circle cx="444" cy="935.8" r="2.55"/>
<circle cx="444.3" cy="939.2" r="2.55"/>
<circle cx="447.7" cy="938.7" r="2.55"/>
<circle cx="454" cy="935" r="2.55"/>
<circle cx="455.2" cy="940" r="2.55"/>
<circle cx="456.8" cy="943" r="2.55"/>
<circle cx="460.2" cy="940.8" r="2.55"/>
<circle cx="466" cy="935" r="2.55"/>
<circle cx="466.3" cy="940.5" r="2.55"/>
<circle cx="471" cy="933.8" r="2.55"/>
<circle cx="475.2" cy="942" r="2.55"/>
<circle cx="481.8" cy="933.3" r="2.55"/>
<circle cx="487.7" cy="937" r="2.55"/>
<circle cx="489.3" cy="940" r="2.55"/>
<circle cx="489.8" cy="943" r="2.55"/>
<circle cx="492.2" cy="933.8" r="2.55"/>
<circle cx="501" cy="932.5" r="2.55"/>
<circle cx="502.7" cy="933.3" r="2.55"/>
<circle cx="504.3" cy="940.3" r="2.55"/>
<circle cx="513" cy="938.7" r="2.55"/>
<circle cx="518.5" cy="931.2" r="2.55"/>
<circle cx="526.8" cy="932.5" r="2.55"/>
<circle cx="529.3" cy="930.8" r="2.55"/>
<circle cx="532.7" cy="932.5" r="2.55"/>
<circle cx="531" cy="939.5" r="2.55"/>
<circle cx="531" cy="935.8" r="2.55"/>
<circle cx="537.7" cy="933.8" r="2.55"/>
<circle cx="542.7" cy="934.2" r="2.55"/>
<circle cx="546" cy="935" r="2.55"/>
<circle cx="557.3" cy="936.3" r="2.55"/>
<circle cx="561" cy="930" r="2.55"/>
<circle cx="563.5" cy="930" r="2.55"/>
<circle cx="561.8" cy="934.5" r="2.55"/>
<circle cx="578.8" cy="929.3" r="2.55"/>
<circle cx="583.8" cy="944" r="2.55"/>
<circle cx="589" cy="929.3" r="2.55"/>
<circle cx="594.8" cy="934.2" r="2.55"/>
<circle cx="612.7" cy="931.7" r="2.55"/>
<circle cx="614.3" cy="935.8" r="2.55"/>
<circle cx="613" cy="931.3" r="2.55"/>
<circle cx="614.2" cy="936.3" r="2.55"/>
<circle cx="619.2" cy="934.5" r="2.55"/>
<circle cx="626.7" cy="930.5" r="2.55"/>
<circle cx="625.8" cy="934.2" r="2.55"/>
<circle cx="627.8" cy="938" r="2.55"/>
<circle cx="634.2" cy="937.3" r="2.55"/>
<circle cx="637" cy="926.8" r="2.55"/>
<circle cx="647.8" cy="927.7" r="2.55"/>
<circle cx="649.7" cy="931" r="2.55"/>
<circle cx="653.3" cy="937.3" r="2.55"/>
<circle cx="661.2" cy="934.7" r="2.55"/>
<circle cx="664.2" cy="930.7" r="2.55"/>
<circle cx="667.7" cy="926.8" r="2.55"/>
<circle cx="672" cy="928.7" r="2.55"/>
<circle cx="685.2" cy="934.2" r="2.55"/>
<circle cx="692.5" cy="927" r="2.55"/>
<circle cx="703" cy="934.2" r="2.55"/>
<circle cx="715" cy="926.3" r="2.55"/>
<circle cx="715.5" cy="929.5" r="2.55"/>
<circle cx="723.5" cy="930.5" r="2.55"/>
<circle cx="731.7" cy="927" r="2.55"/>
<circle cx="732.2" cy="930.3" r="2.55"/>
<circle cx="734.7" cy="926.3" r="2.55"/>
<circle cx="739.7" cy="924.7" r="2.55"/>
<circle cx="759.3" cy="919.2" r="2.55"/>
<circle cx="763" cy="927.5" r="2.55"/>
<circle cx="776.7" cy="928.7" r="2.55"/>
<circle cx="779.2" cy="924.3" r="2.55"/>
<circle cx="805.8" cy="921.7" r="2.55"/>
<circle cx="811.3" cy="919.5" r="2.55"/>
<circle cx="852.5" cy="919.2" r="2.55"/>
<circle cx="861" cy="918.7" r="2.55"/>
<circle cx="949" cy="911" r="2.55"/>
<circle cx="975" cy="910.7" r="2.55"/>
<circle cx="974.3" cy="915" r="2.55"/>
<circle cx="985" cy="913.3" r="2.55"/>
<circle cx="989" cy="915" r="2.55"/>
<circle cx="1083.3" cy="908.3" r="2.55"/>
<circle cx="1097" cy="905" r="2.55"/>
<circle cx="1156.3" cy="904.7" r="2.55"/>
<circle cx="1255.3" cy="899.3" r="2.55"/>
<circle cx="1340" cy="897.7" r="2.55"/>
<circle cx="1773.7" cy="860.3" r="2.55"/>
</g>
</svg>
<div class="abs" style="left:18px;top:1033px;width:1902px;height:1px;background:#000"></div>
<div class="abs" style="left:18px;top:1034px;width:1902px;height:24px;background:#f0f0f0"></div>
<div class="abs" style="left:207px;top:1033px;width:64px;height:20px;background:#fff;border:1px solid #000;border-top:none"></div>
<div class="tab" style="left:33px;letter-spacing:-0.1px;">Overview</div>
<div class="tab" style="left:102px;letter-spacing:-0.1px;">Settings</div>
<div class="tab" style="left:164px;letter-spacing:0px;">Inputs</div>
<div class="tab" style="left:217px;letter-spacing:-0.25px;color:#000">Backtest</div>
<div class="tab" style="left:281px;letter-spacing:-0.3px;">Graph</div>
<div class="tab" style="left:333px;letter-spacing:0px;">Agents</div>
<div class="tab" style="left:390px;letter-spacing:-0.1px;">Journal</div>
<div class="abs" style="left:92px;top:1037px;width:1px;height:15px;background:#6a6a6a"></div>
<div class="abs" style="left:154px;top:1037px;width:1px;height:15px;background:#6a6a6a"></div>
<div class="abs" style="left:323px;top:1037px;width:1px;height:15px;background:#6a6a6a"></div>
<div class="abs" style="left:380px;top:1037px;width:1px;height:15px;background:#6a6a6a"></div>
<div class="t" style="left:1741px;top:1035px;letter-spacing:-0.38px">01:05:26 / 01:05:29</div>
<div class="abs" style="left:1845px;top:1036px;width:74px;height:18px;background:#9ccc60;text-align:center;line-height:18px;font-size:12px">Start</div>
<div class="abs" style="left:0;top:1058px;width:1920px;height:1px;background:#a0a0a0"></div>
<div class="abs" style="left:0;top:1059px;width:1920px;height:19px;background:#f0f0f0;border-top:1px solid #fff;border-bottom:1px solid #fbfbfb"></div>
<div class="t" style="left:2px;top:1060px;letter-spacing:-0.34px">For Help, press F1</div>
<div class="t" style="left:1233px;top:1060px;letter-spacing:-0.1px">Default</div>
<div class="t" style="left:1825px;top:1060px;letter-spacing:-0.36px">469 / 649 Kb</div>
<div class="abs" style="left:1227px;top:1061px;width:2px;height:17px;background:linear-gradient(90deg,#868686 0,#868686 50%,#fff 50%,#fff 100%)"></div>
<div class="abs" style="left:1355px;top:1061px;width:2px;height:17px;background:linear-gradient(90deg,#868686 0,#868686 50%,#fff 50%,#fff 100%)"></div>
<div class="abs" style="left:1453px;top:1061px;width:2px;height:17px;background:linear-gradient(90deg,#868686 0,#868686 50%,#fff 50%,#fff 100%)"></div>
<div class="abs" style="left:1524px;top:1061px;width:2px;height:17px;background:linear-gradient(90deg,#868686 0,#868686 50%,#fff 50%,#fff 100%)"></div>
<div class="abs" style="left:1595px;top:1061px;width:2px;height:17px;background:linear-gradient(90deg,#868686 0,#868686 50%,#fff 50%,#fff 100%)"></div>
<div class="abs" style="left:1663px;top:1061px;width:2px;height:17px;background:linear-gradient(90deg,#868686 0,#868686 50%,#fff 50%,#fff 100%)"></div>
<div class="abs" style="left:1733px;top:1061px;width:2px;height:17px;background:linear-gradient(90deg,#868686 0,#868686 50%,#fff 50%,#fff 100%)"></div>
<div class="abs" style="left:1799px;top:1061px;width:2px;height:17px;background:linear-gradient(90deg,#868686 0,#868686 50%,#fff 50%,#fff 100%)"></div>
<svg width="1920" height="1080" viewBox="0 0 1920 1080" shape-rendering="crispEdges"><g fill="#12a81a"><rect x="1805" y="1072" width="2" height="3"/><rect x="1808" y="1070" width="2" height="5"/><rect x="1811" y="1068" width="2" height="7"/><rect x="1814" y="1066" width="2" height="9"/><rect x="1817" y="1064" width="2" height="11"/></g></svg>
<div class="abs" style="left:0;top:1078px;width:48px;height:2px;background:#1a1a1a"></div>
<div class="abs" style="left:48px;top:1078px;width:344px;height:2px;background:#d8d8d8"></div>
<div class="abs" style="left:392px;top:1078px;width:1528px;height:2px;background:#1a1a1a"></div>
</body></html>
